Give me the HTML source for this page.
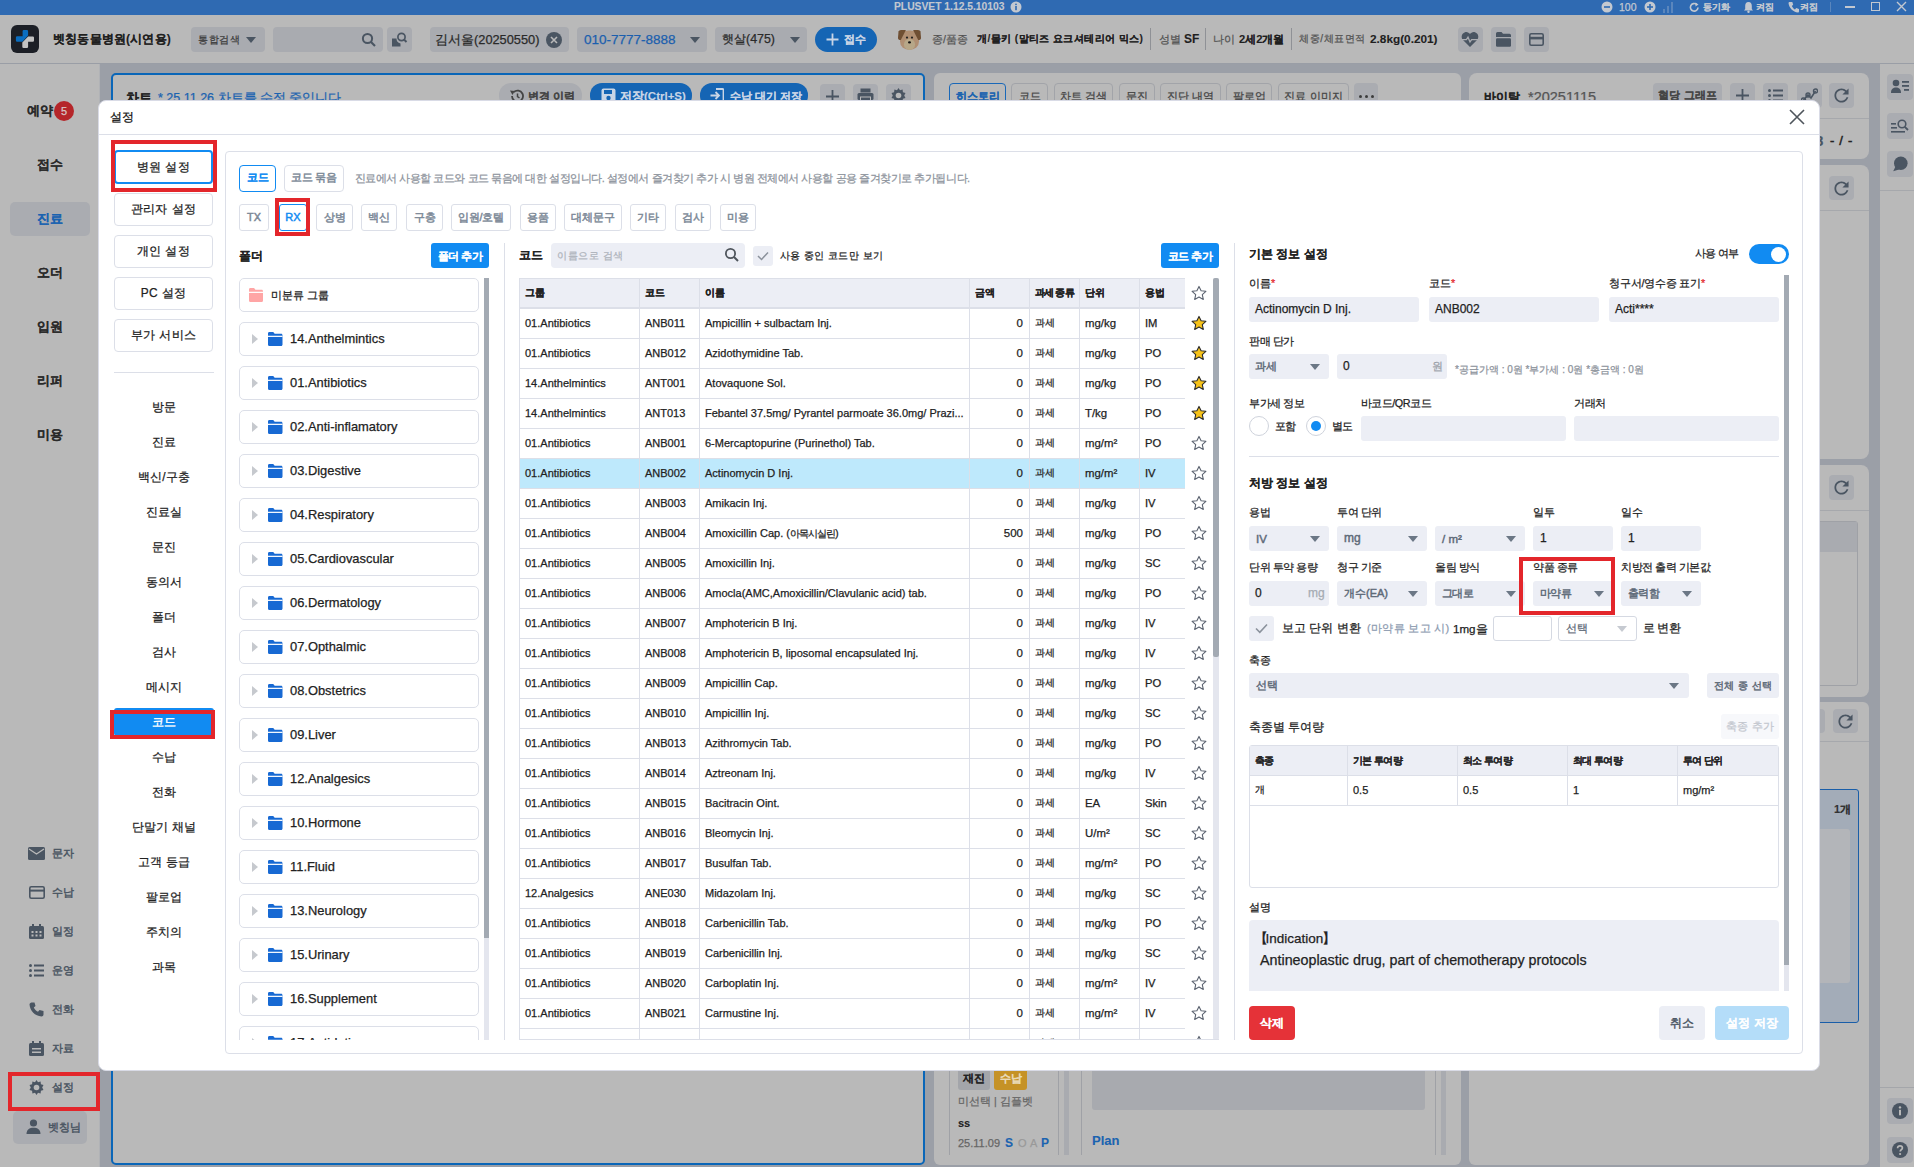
<!DOCTYPE html>
<html><head><meta charset="utf-8"><style>
*{box-sizing:border-box;margin:0;padding:0}
html,body{width:1914px;height:1167px;overflow:hidden}
body{position:relative;font-family:"Liberation Sans",sans-serif;color:#222;background:#9b9fa7}
.a{position:absolute}
.t{white-space:nowrap;-webkit-text-stroke:0.25px currentColor}
</style></head><body>
<div class="a " style="left:0px;top:0px;width:1914px;height:15px;background:#2f6ab2"></div>
<div class="a t" style="left:894px;top:-0.5px;line-height:14px;font-size:10.3px;font-weight:700;color:#c3c8d0;;-webkit-text-stroke:0.1px currentColor">PLUSVET 1.12.5.10103</div>
<svg class="a" style="left:1010px;top:1px;" width="12" height="12" viewBox="0 0 12 12"><circle cx="6" cy="6" r="5.5" fill="#c3c8d0"/><rect x="5.2" y="5" width="1.6" height="4.2" fill="#2f6ab2"/><circle cx="6" cy="3.3" r="0.9" fill="#2f6ab2"/></svg>
<svg class="a" style="left:1601px;top:1px;" width="12" height="12" viewBox="0 0 12 12"><circle cx="6" cy="6" r="5.5" fill="#c3c8d0"/><rect x="3" y="5.2" width="6" height="1.6" fill="#2f6ab2"/></svg>
<div class="a t" style="left:1619px;top:0.0px;line-height:14px;font-size:10.5px;font-weight:400;color:#c3c8d0;">100</div>
<svg class="a" style="left:1644px;top:1px;" width="12" height="12" viewBox="0 0 12 12"><circle cx="6" cy="6" r="5.5" fill="#c3c8d0"/><rect x="3" y="5.2" width="6" height="1.6" fill="#2f6ab2"/><rect x="5.2" y="3" width="1.6" height="6" fill="#2f6ab2"/></svg>
<svg class="a" style="left:1663px;top:1px;" width="12" height="12" viewBox="0 0 12 12"><rect x="0" y="8" width="2" height="4" fill="#5a86bd"/><rect x="4" y="5" width="2" height="7" fill="#5a86bd"/><rect x="8" y="1" width="2" height="11" fill="#5a86bd"/></svg>
<svg class="a" style="left:1689px;top:2px;" width="11" height="11" viewBox="0 0 11 11"><path d="M9 5.5A3.8 3.8 0 1 1 7.6 2.4" fill="none" stroke="#c3c8d0" stroke-width="1.6"/><path d="M6.5 0.5L9.5 2.5L6.5 4.5Z" fill="#c3c8d0"/></svg>
<div class="a t" style="left:1703px;top:0.0px;line-height:14px;font-size:9px;font-weight:700;color:#c3c8d0;;-webkit-text-stroke:0.1px currentColor">동기화</div>
<svg class="a" style="left:1743px;top:1px;" width="11" height="12" viewBox="0 0 11 12"><path d="M5.5 1C3 1 2.2 3 2.2 5V8L1 9.5H10L8.8 8V5C8.8 3 8 1 5.5 1Z" fill="#c3c8d0"/><circle cx="5.5" cy="10.8" r="1.2" fill="#c3c8d0"/></svg>
<div class="a t" style="left:1756px;top:0.0px;line-height:14px;font-size:9px;font-weight:700;color:#c3c8d0;;-webkit-text-stroke:0.1px currentColor">켜짐</div>
<svg class="a" style="left:1788px;top:1px;" width="11" height="12" viewBox="0 0 11 12"><path d="M2 1L4.3 1L5.2 3.8L3.8 5C4.5 6.6 5.6 7.8 7 8.5L8.2 7.1L11 8V10.5C11 11 10.5 11.5 10 11.5C5 11 1 7 0.5 2C0.5 1.5 1 1 2 1Z" fill="#c3c8d0"/></svg>
<div class="a t" style="left:1800px;top:0.0px;line-height:14px;font-size:9px;font-weight:700;color:#c3c8d0;;-webkit-text-stroke:0.1px currentColor">켜짐</div>
<div class="a " style="left:1830px;top:2px;width:1px;height:10px;background:#5a86bd"></div>
<div class="a " style="left:1845px;top:6px;width:10px;height:1.5px;background:#c3c8d0"></div>
<div class="a " style="left:1871px;top:2px;width:9px;height:9px;border:1.3px solid #c3c8d0"></div>
<svg class="a" style="left:1896px;top:1px;" width="11" height="11" viewBox="0 0 11 11"><path d="M1 1L10 10M10 1L1 10" stroke="#c3c8d0" stroke-width="1.4"/></svg>
<div class="a " style="left:0px;top:15px;width:1914px;height:49px;background:#b9b9b9;border-bottom:1px solid #9a9ea6"></div>
<div class="a " style="left:11px;top:25px;width:28px;height:28px;background:#1c1f26;border-radius:6px"></div>
<svg class="a" style="left:11px;top:25px;" width="28" height="28" viewBox="0 0 28 28"><path d="M11.6 6.2Q11.6 5 12.8 5L15.9 5Q17.1 5 17.1 6.2L17.1 10.6L11.4 16.8L6.1 16.8Q4.9 16.8 4.9 15.6L4.9 12.5Q4.9 11.3 6.1 11.3L11.6 11.3Z" fill="#0a6dbf"/><path d="M17.1 11.4L21.8 11.4Q23 11.4 23 12.6L23 15.6Q23 16.8 21.8 16.8L17.1 16.8L17.1 21.8Q17.1 23 15.9 23L12.5 23Q11.3 23 11.3 21.8L11.3 17.4Z" fill="#c2c2c2"/></svg>
<div class="a t" style="left:53px;top:29.5px;line-height:19px;font-size:12.2px;font-weight:700;color:#1f1f1f;letter-spacing:0.18px;-webkit-text-stroke:0.1px currentColor">벳칭동물병원(시연용)</div>
<div class="a " style="left:191px;top:27px;width:74px;height:25px;background:#a9abb0;border-radius:4px"></div>
<div class="a t" style="left:198px;top:31.5px;line-height:16px;font-size:10.4px;font-weight:400;color:#3c3c3c;letter-spacing:0.6px">통합검색</div>
<svg class="a" style="left:246px;top:37px;" width="10" height="6" viewBox="0 0 10 6"><path d="M0 0H10L5 6Z" fill="#4a5562"/></svg>
<div class="a " style="left:273px;top:27px;width:110px;height:25px;background:#a9abb0;border-radius:4px"></div>
<svg class="a" style="left:361px;top:32px;" width="16" height="16" viewBox="0 0 16 16"><circle cx="6.5" cy="6.5" r="4.6" fill="none" stroke="#4a5562" stroke-width="2"/><path d="M10 10L14 14" stroke="#4a5562" stroke-width="2.2"/></svg>
<div class="a " style="left:387px;top:27px;width:25px;height:25px;background:#a9abb0;border-radius:4px"></div>
<svg class="a" style="left:391px;top:31px;" width="17" height="17" viewBox="0 0 17 17"><path d="M1 7.5H5.5A5 5 0 0 0 9.5 12.5V15.5H1Z" fill="#4a5562"/><circle cx="10.5" cy="6" r="3.6" fill="none" stroke="#4a5562" stroke-width="1.7"/><path d="M13 8.5L15.5 11" stroke="#4a5562" stroke-width="1.9"/></svg>
<div class="a " style="left:430px;top:27px;width:139px;height:25px;background:#a9abb0;border-radius:4px"></div>
<div class="a t" style="left:435px;top:29.5px;line-height:20px;font-size:12.8px;font-weight:400;color:#2a2a2a;">김서울(20250550)</div>
<svg class="a" style="left:546px;top:32px;" width="16" height="16" viewBox="0 0 16 16"><circle cx="8" cy="8" r="8" fill="#4a5562"/><path d="M5 5L11 11M11 5L5 11" stroke="#b9b9b9" stroke-width="1.6"/></svg>
<div class="a " style="left:577px;top:27px;width:130px;height:25px;background:#a9abb0;border-radius:4px"></div>
<div class="a t" style="left:584px;top:29.0px;line-height:21px;font-size:13.5px;font-weight:400;color:#1b5fae;">010-7777-8888</div>
<svg class="a" style="left:690px;top:37px;" width="10" height="6" viewBox="0 0 10 6"><path d="M0 0H10L5 6Z" fill="#4a5562"/></svg>
<div class="a " style="left:715px;top:27px;width:92px;height:25px;background:#a9abb0;border-radius:4px"></div>
<div class="a t" style="left:722px;top:30.0px;line-height:19px;font-size:12.4px;font-weight:400;color:#2a2a2a;">햇살(475)</div>
<svg class="a" style="left:790px;top:37px;" width="10" height="6" viewBox="0 0 10 6"><path d="M0 0H10L5 6Z" fill="#4a5562"/></svg>
<div class="a " style="left:815px;top:27px;width:62px;height:25px;background:#1565b4;border-radius:13px"></div>
<svg class="a" style="left:826px;top:33px;" width="13" height="13" viewBox="0 0 13 13"><path d="M6.5 0.5V12.5M0.5 6.5H12.5" stroke="#c8d5e6" stroke-width="1.8"/></svg>
<div class="a t" style="left:844px;top:31.0px;line-height:17px;font-size:11px;font-weight:700;color:#c8d5e6;;-webkit-text-stroke:0.1px currentColor">접수</div>
<svg class="a" style="left:897px;top:27px;" width="25" height="24" viewBox="0 0 25 24"><rect x="3" y="3.5" width="19" height="19.2" rx="8.5" fill="#b08f73"/><path d="M1.5 4.5Q2 3 4 3L8.9 3L3.8 13Q1 13 1 11Z" fill="#6f4f33"/><path d="M23.5 4.5Q23 3 21 3L16.1 3L21.2 13Q24 13 24 11Z" fill="#6f4f33"/><circle cx="12.5" cy="17.4" r="5.6" fill="#b7a788"/><circle cx="10" cy="10.6" r="1.1" fill="#222"/><circle cx="15" cy="10.6" r="1.1" fill="#222"/><ellipse cx="12.5" cy="15.4" rx="1.5" ry="1.1" fill="#111"/></svg>
<div class="a t" style="left:932px;top:30.5px;line-height:17px;font-size:10.7px;font-weight:400;color:#545454;">종/품종</div>
<div class="a t" style="left:977px;top:31.0px;line-height:16px;font-size:10.2px;font-weight:700;color:#1f1f1f;letter-spacing:0.41px;-webkit-text-stroke:0.1px currentColor">개/몰키 (말티즈 요크셔테리어 믹스)</div>
<div class="a " style="left:1150px;top:28px;width:1px;height:22px;background:#8f9196"></div>
<div class="a t" style="left:1159px;top:30.5px;line-height:17px;font-size:10.7px;font-weight:400;color:#545454;">성별</div>
<div class="a t" style="left:1184px;top:29.5px;line-height:19px;font-size:12px;font-weight:700;color:#1f1f1f;;-webkit-text-stroke:0.1px currentColor">SF</div>
<div class="a " style="left:1205px;top:28px;width:1px;height:22px;background:#8f9196"></div>
<div class="a t" style="left:1213px;top:30.5px;line-height:17px;font-size:10.7px;font-weight:400;color:#545454;">나이</div>
<div class="a t" style="left:1239px;top:30.5px;line-height:17px;font-size:11.2px;font-weight:700;color:#1f1f1f;;-webkit-text-stroke:0.1px currentColor">2세2개월</div>
<div class="a " style="left:1291px;top:28px;width:1px;height:22px;background:#8f9196"></div>
<div class="a t" style="left:1299px;top:31.0px;line-height:16px;font-size:10.1px;font-weight:400;color:#545454;letter-spacing:0.57px">체중/체표면적</div>
<div class="a t" style="left:1370px;top:30.0px;line-height:18px;font-size:11.8px;font-weight:700;color:#1f1f1f;;-webkit-text-stroke:0.1px currentColor">2.8kg(0.201)</div>
<div class="a " style="left:1458px;top:27px;width:25px;height:25px;background:#a9abb0;border-radius:4px"></div>
<div class="a " style="left:1491px;top:27px;width:25px;height:25px;background:#a9abb0;border-radius:4px"></div>
<div class="a " style="left:1524px;top:27px;width:25px;height:25px;background:#a9abb0;border-radius:4px"></div>
<svg class="a" style="left:1461px;top:31px;" width="18" height="16" viewBox="0 0 18 16"><path d="M9 16L2 9C0 7 0 2.5 4 1.2C6.3 0.5 8 1.8 9 3C10 1.8 11.7 0.5 14 1.2C18 2.5 18 7 16 9Z" fill="#4a5562"/><path d="M0 8.6H5.4L7 6.2L9 11L10.6 8.6H18" fill="none" stroke="#aaacb1" stroke-width="1.3"/></svg>
<svg class="a" style="left:1496px;top:32px;" width="15" height="15" viewBox="0 0 15 15"><path d="M0 1.5Q0 0 1.5 0H5.5L7 1.8H13.5Q15 1.8 15 3.3V5H0Z" fill="#4a5562"/><rect x="0" y="6.3" width="15" height="8.5" rx="1.2" fill="#4a5562"/></svg>
<svg class="a" style="left:1529px;top:33px;" width="15" height="13" viewBox="0 0 15 13"><rect x="0.8" y="0.8" width="13.4" height="11.4" rx="1.5" fill="none" stroke="#4a5562" stroke-width="1.6"/><rect x="0.8" y="3.8" width="13.4" height="2.6" fill="#4a5562"/></svg>
<div class="a " style="left:0px;top:64px;width:100px;height:1103px;background:#b9b9b9;border-right:1px solid #b0b2b6"></div>
<div class="a t" style="left:27px;top:101.0px;line-height:20px;font-size:13px;font-weight:700;color:#2a2a2a;;-webkit-text-stroke:0.1px currentColor">예약</div>
<div class="a " style="left:54px;top:101px;width:20px;height:20px;background:#b5262a;border-radius:10px"></div>
<div class="a t" style="left:54px;top:103.0px;line-height:17px;font-size:11px;font-weight:400;color:#d8c6c6;width:20px;text-align:center;">5</div>
<div class="a t" style="left:0px;top:155.0px;line-height:20px;font-size:13px;font-weight:700;color:#2a2a2a;width:99px;text-align:center;;-webkit-text-stroke:0.1px currentColor">접수</div>
<div class="a " style="left:10px;top:202px;width:80px;height:34px;background:#aaacb1;border-radius:5px"></div>
<div class="a t" style="left:0px;top:208.5px;line-height:20px;font-size:13px;font-weight:700;color:#1b63b0;width:99px;text-align:center;;-webkit-text-stroke:0.1px currentColor">진료</div>
<div class="a t" style="left:0px;top:262.5px;line-height:20px;font-size:13px;font-weight:700;color:#2a2a2a;width:99px;text-align:center;;-webkit-text-stroke:0.1px currentColor">오더</div>
<div class="a t" style="left:0px;top:317.0px;line-height:20px;font-size:13px;font-weight:700;color:#2a2a2a;width:99px;text-align:center;;-webkit-text-stroke:0.1px currentColor">입원</div>
<div class="a t" style="left:0px;top:371.0px;line-height:20px;font-size:13px;font-weight:700;color:#2a2a2a;width:99px;text-align:center;;-webkit-text-stroke:0.1px currentColor">리퍼</div>
<div class="a t" style="left:0px;top:425.0px;line-height:20px;font-size:13px;font-weight:700;color:#2a2a2a;width:99px;text-align:center;;-webkit-text-stroke:0.1px currentColor">미용</div>
<div class="a t" style="left:52px;top:845.0px;line-height:17px;font-size:11px;font-weight:400;color:#4a5562;-webkit-text-stroke:0.45px currentColor">문자</div>
<div class="a t" style="left:52px;top:884.0px;line-height:17px;font-size:11px;font-weight:400;color:#4a5562;-webkit-text-stroke:0.45px currentColor">수납</div>
<div class="a t" style="left:52px;top:923.0px;line-height:17px;font-size:11px;font-weight:400;color:#4a5562;-webkit-text-stroke:0.45px currentColor">일정</div>
<div class="a t" style="left:52px;top:962.0px;line-height:17px;font-size:11px;font-weight:400;color:#4a5562;-webkit-text-stroke:0.45px currentColor">운영</div>
<div class="a t" style="left:52px;top:1001.0px;line-height:17px;font-size:11px;font-weight:400;color:#4a5562;-webkit-text-stroke:0.45px currentColor">전화</div>
<div class="a t" style="left:52px;top:1040.0px;line-height:17px;font-size:11px;font-weight:400;color:#4a5562;-webkit-text-stroke:0.45px currentColor">자료</div>
<div class="a t" style="left:52px;top:1079.0px;line-height:17px;font-size:11px;font-weight:400;color:#4a5562;-webkit-text-stroke:0.45px currentColor">설정</div>
<svg class="a" style="left:28px;top:847px;" width="17" height="13" viewBox="0 0 17 13"><rect x="0" y="0" width="17" height="13" rx="1.5" fill="#4a5562"/><path d="M1 2L8.5 7L16 2" fill="none" stroke="#b9b9b9" stroke-width="1.3"/></svg>
<svg class="a" style="left:29px;top:886px;" width="16" height="13" viewBox="0 0 16 13"><rect x="0.8" y="0.8" width="14.4" height="11.4" rx="1.5" fill="none" stroke="#4a5562" stroke-width="1.6"/><rect x="0.8" y="3.6" width="14.4" height="2" fill="#4a5562"/></svg>
<svg class="a" style="left:29px;top:924px;" width="15" height="15" viewBox="0 0 15 15"><rect x="0" y="2" width="15" height="13" rx="1.5" fill="#4a5562"/><rect x="3" y="0" width="2" height="4" fill="#4a5562"/><rect x="10" y="0" width="2" height="4" fill="#4a5562"/><g fill="#b9b9b9"><rect x="2.5" y="7" width="2" height="2"/><rect x="6.5" y="7" width="2" height="2"/><rect x="10.5" y="7" width="2" height="2"/><rect x="2.5" y="10.5" width="2" height="2"/><rect x="6.5" y="10.5" width="2" height="2"/><rect x="10.5" y="10.5" width="2" height="2"/></g></svg>
<svg class="a" style="left:29px;top:964px;" width="15" height="13" viewBox="0 0 15 13"><g fill="#4a5562"><circle cx="1.5" cy="1.5" r="1.5"/><circle cx="1.5" cy="6.5" r="1.5"/><circle cx="1.5" cy="11.5" r="1.5"/><rect x="5" y="0.5" width="10" height="2"/><rect x="5" y="5.5" width="10" height="2"/><rect x="5" y="10.5" width="10" height="2"/></g></svg>
<svg class="a" style="left:29px;top:1002px;" width="15" height="15" viewBox="0 0 15 15"><path d="M2.5 0.5L5.5 0.5L6.5 4L4.8 5.5C5.6 7.3 7 8.8 9 9.8L10.5 8L14.5 9V12.5C14.5 13.5 13.5 14.5 12.5 14.5C6 14 1 9 0.5 2.5C0.5 1.5 1.5 0.5 2.5 0.5Z" fill="#4a5562"/></svg>
<svg class="a" style="left:29px;top:1041px;" width="15" height="15" viewBox="0 0 15 15"><rect x="0" y="2" width="15" height="13" rx="1.5" fill="#4a5562"/><rect x="3" y="0" width="2" height="4" fill="#4a5562"/><rect x="10" y="0" width="2" height="4" fill="#4a5562"/><rect x="3" y="7" width="9" height="1.5" fill="#b9b9b9"/><rect x="3" y="10.5" width="9" height="1.5" fill="#b9b9b9"/></svg>
<svg class="a" style="left:29px;top:1080px;" width="15" height="15" viewBox="0 0 15 15"><path d="M7.5 0L9 2.2L11.6 1.5L11.9 4.2L14.5 5L13.2 7.5L14.5 10L11.9 10.8L11.6 13.5L9 12.8L7.5 15L6 12.8L3.4 13.5L3.1 10.8L0.5 10L1.8 7.5L0.5 5L3.1 4.2L3.4 1.5L6 2.2Z" fill="#4a5562"/><circle cx="7.5" cy="7.5" r="2.8" fill="#b9b9b9"/></svg>
<div class="a " style="left:8px;top:1072px;width:91.5px;height:39px;border:4px solid #e3262b"></div>
<div class="a " style="left:13px;top:1111px;width:74px;height:33px;background:#aaacb1;border-radius:5px"></div>
<svg class="a" style="left:26px;top:1119px;" width="15" height="15" viewBox="0 0 15 15"><circle cx="7.5" cy="4" r="3.6" fill="#4a5562"/><path d="M0.5 15C0.5 10.5 3.5 8.7 7.5 8.7C11.5 8.7 14.5 10.5 14.5 15Z" fill="#4a5562"/></svg>
<div class="a t" style="left:48px;top:1118.5px;line-height:17px;font-size:11px;font-weight:400;color:#4a5562;-webkit-text-stroke:0.45px currentColor">벳칭님</div>
<div class="a " style="left:111px;top:73px;width:814px;height:1092px;background:#b9b9b9;border-radius:5px;border:2px solid #0a66b8"></div>
<div class="a t" style="left:126px;top:87.5px;line-height:20px;font-size:13px;font-weight:700;color:#222;;-webkit-text-stroke:0.1px currentColor">차트</div>
<div class="a t" style="left:158px;top:87.5px;line-height:20px;font-size:12.5px;font-weight:400;color:#1b63b0;">* 25.11.26 차트를 수정 중입니다</div>
<div class="a " style="left:499px;top:83px;width:83px;height:25px;background:#aaacb1;border-radius:12px"></div>
<div class="a t" style="left:528px;top:87.5px;line-height:17px;font-size:11px;font-weight:700;color:#444;;-webkit-text-stroke:0.1px currentColor">변경 이력</div>
<div class="a " style="left:590px;top:83px;width:102px;height:25px;background:#1565b4;border-radius:12px"></div>
<div class="a t" style="left:620px;top:87.0px;line-height:18px;font-size:11.5px;font-weight:700;color:#c8d5e6;;-webkit-text-stroke:0.1px currentColor">저장(Ctrl+S)</div>
<div class="a " style="left:700px;top:83px;width:108px;height:25px;background:#1565b4;border-radius:12px"></div>
<div class="a t" style="left:730px;top:87.5px;line-height:17px;font-size:11px;font-weight:700;color:#c8d5e6;;-webkit-text-stroke:0.1px currentColor">수납 대기 저장</div>
<div class="a " style="left:820px;top:84px;width:25px;height:24px;background:#aaacb1;border-radius:4px"></div>
<div class="a " style="left:853px;top:84px;width:25px;height:24px;background:#aaacb1;border-radius:4px"></div>
<div class="a " style="left:886px;top:84px;width:25px;height:24px;background:#aaacb1;border-radius:4px"></div>
<svg class="a" style="left:509px;top:89px;" width="16" height="14" viewBox="0 0 16 14"><path d="M3 7A5.5 5.5 0 1 0 4.8 3" fill="none" stroke="#444" stroke-width="1.8"/><path d="M1 1.5L5.8 2L3.5 6Z" fill="#444"/><path d="M8.5 4.5V7.5L10.5 9" fill="none" stroke="#444" stroke-width="1.5"/></svg>
<svg class="a" style="left:601px;top:88px;" width="15" height="15" viewBox="0 0 15 15"><rect x="0.5" y="0.5" width="14" height="14" rx="2" fill="#c8d5e6"/><rect x="3" y="2" width="8" height="4" fill="#1565b4"/><circle cx="7.5" cy="10" r="2.2" fill="#1565b4"/></svg>
<svg class="a" style="left:710px;top:88px;" width="14" height="15" viewBox="0 0 14 15"><path d="M6 1H12.5C13 1 13.5 1.5 13.5 2V13C13.5 13.5 13 14 12.5 14H6" fill="none" stroke="#c8d5e6" stroke-width="1.8"/><path d="M0.5 7.5H8.5M5.5 4L9 7.5L5.5 11" fill="none" stroke="#c8d5e6" stroke-width="1.8"/></svg>
<svg class="a" style="left:825px;top:89px;" width="15" height="15" viewBox="0 0 15 15"><path d="M7.5 1V14M1 7.5H14" stroke="#4a5562" stroke-width="1.8"/></svg>
<svg class="a" style="left:857px;top:88px;" width="17" height="15" viewBox="0 0 17 15"><rect x="3.5" y="0.5" width="10" height="4" fill="#4a5562"/><rect x="0.5" y="5" width="16" height="7" rx="1.5" fill="#4a5562"/><rect x="3.5" y="9" width="10" height="6" fill="#4a5562" stroke="#b9b9b9" stroke-width="1"/></svg>
<svg class="a" style="left:891px;top:88px;" width="15" height="15" viewBox="0 0 15 15"><path d="M7.5 0L9 2.2L11.6 1.5L11.9 4.2L14.5 5L13.2 7.5L14.5 10L11.9 10.8L11.6 13.5L9 12.8L7.5 15L6 12.8L3.4 13.5L3.1 10.8L0.5 10L1.8 7.5L0.5 5L3.1 4.2L3.4 1.5L6 2.2Z" fill="#4a5562"/><circle cx="7.5" cy="7.5" r="2.8" fill="#b9b9b9"/></svg>
<div class="a " style="left:934px;top:73px;width:527px;height:1092px;background:#b9b9b9;border-radius:6px"></div>
<div class="a " style="left:949px;top:83px;width:57px;height:24px;border:1px solid #1a68b8;border-radius:4px;background:#b9b9b9"></div>
<div class="a t" style="left:949px;top:87.5px;line-height:17px;font-size:11px;font-weight:700;color:#1b63b0;width:57px;text-align:center;;-webkit-text-stroke:0.1px currentColor">히스토리</div>
<div class="a " style="left:1011px;top:83px;width:37px;height:24px;border:1px solid #a2a4a9;border-radius:4px"></div>
<div class="a t" style="left:1011px;top:87.5px;line-height:17px;font-size:11px;font-weight:400;color:#444;width:37px;text-align:center;">코드</div>
<div class="a " style="left:1054px;top:83px;width:59px;height:24px;border:1px solid #a2a4a9;border-radius:4px"></div>
<div class="a t" style="left:1054px;top:87.5px;line-height:17px;font-size:11px;font-weight:400;color:#444;width:59px;text-align:center;">차트 검색</div>
<div class="a " style="left:1119px;top:83px;width:36px;height:24px;border:1px solid #a2a4a9;border-radius:4px"></div>
<div class="a t" style="left:1119px;top:87.5px;line-height:17px;font-size:11px;font-weight:400;color:#444;width:36px;text-align:center;">문진</div>
<div class="a " style="left:1160px;top:83px;width:61px;height:24px;border:1px solid #a2a4a9;border-radius:4px"></div>
<div class="a t" style="left:1160px;top:87.5px;line-height:17px;font-size:11px;font-weight:400;color:#444;width:61px;text-align:center;">진단 내역</div>
<div class="a " style="left:1226px;top:83px;width:46px;height:24px;border:1px solid #a2a4a9;border-radius:4px"></div>
<div class="a t" style="left:1226px;top:87.5px;line-height:17px;font-size:11px;font-weight:400;color:#444;width:46px;text-align:center;">팔로업</div>
<div class="a " style="left:1278px;top:83px;width:71px;height:24px;border:1px solid #a2a4a9;border-radius:4px"></div>
<div class="a t" style="left:1278px;top:87.5px;line-height:17px;font-size:11px;font-weight:400;color:#444;width:71px;text-align:center;">진료 이미지</div>
<div class="a " style="left:1354px;top:83px;width:24px;height:24px;background:#aaacb1;border-radius:4px"></div>
<div class="a " style="left:1358.5px;top:94.5px;width:3.2px;height:3.2px;background:#3c3c3c;border-radius:2px"></div>
<div class="a " style="left:1364.5px;top:94.5px;width:3.2px;height:3.2px;background:#3c3c3c;border-radius:2px"></div>
<div class="a " style="left:1370.5px;top:94.5px;width:3.2px;height:3.2px;background:#3c3c3c;border-radius:2px"></div>
<div class="a " style="left:958px;top:1068px;width:32px;height:22px;background:#a3a5aa;border-radius:3px"></div>
<div class="a t" style="left:958px;top:1070.0px;line-height:16px;font-size:10.5px;font-weight:700;color:#222;width:32px;text-align:center;;-webkit-text-stroke:0.1px currentColor">재진</div>
<div class="a " style="left:994px;top:1068px;width:33px;height:22px;background:#c59226;border-radius:3px"></div>
<div class="a t" style="left:994px;top:1070.0px;line-height:16px;font-size:10.5px;font-weight:700;color:#e8d9b5;width:33px;text-align:center;;-webkit-text-stroke:0.1px currentColor">수납</div>
<div class="a t" style="left:958px;top:1093.0px;line-height:16px;font-size:10.5px;font-weight:400;color:#666;">미선택 | 김플벳</div>
<div class="a t" style="left:958px;top:1114.5px;line-height:17px;font-size:11px;font-weight:700;color:#222;;-webkit-text-stroke:0.1px currentColor">ss</div>
<div class="a t" style="left:958px;top:1135.0px;line-height:17px;font-size:11px;font-weight:400;color:#666;">25.11.09</div>
<div class="a t" style="left:1005px;top:1134.0px;line-height:19px;font-size:12px;font-weight:700;color:#1b63b0;;-webkit-text-stroke:0.1px currentColor">S</div>
<div class="a t" style="left:1018px;top:1135.0px;line-height:17px;font-size:11px;font-weight:400;color:#999;">O</div>
<div class="a t" style="left:1030px;top:1135.0px;line-height:17px;font-size:11px;font-weight:400;color:#999;">A</div>
<div class="a t" style="left:1041px;top:1134.0px;line-height:19px;font-size:12px;font-weight:700;color:#1b63b0;;-webkit-text-stroke:0.1px currentColor">P</div>
<div class="a " style="left:949px;top:1040px;width:1px;height:115px;background:#9fa1a6"></div>
<div class="a " style="left:1058px;top:1040px;width:1px;height:115px;background:#9fa1a6"></div>
<div class="a " style="left:1064px;top:1040px;width:5px;height:115px;background:#a9abb0"></div>
<div class="a " style="left:1081px;top:1040px;width:1px;height:115px;background:#9fa1a6"></div>
<div class="a " style="left:1092px;top:1040px;width:333px;height:70px;background:#a8aaaf;border-radius:3px"></div>
<div class="a t" style="left:1092px;top:1131.0px;line-height:20px;font-size:13px;font-weight:700;color:#1b63b0;;-webkit-text-stroke:0.1px currentColor">Plan</div>
<div class="a " style="left:1435px;top:1040px;width:1px;height:115px;background:#9fa1a6"></div>
<div class="a " style="left:1441px;top:1040px;width:5px;height:115px;background:#a9abb0"></div>
<div class="a " style="left:1469px;top:73px;width:400px;height:86px;background:#b9b9b9;border-radius:8px"></div>
<div class="a t" style="left:1484px;top:87.5px;line-height:19px;font-size:12px;font-weight:700;color:#222;;-webkit-text-stroke:0.1px currentColor">바이탈</div>
<div class="a t" style="left:1528px;top:86.0px;line-height:23px;font-size:14.5px;font-weight:400;color:#555;">*20251115</div>
<div class="a " style="left:1653px;top:83px;width:69px;height:24px;background:#aaacb1;border-radius:4px"></div>
<div class="a t" style="left:1653px;top:86.5px;line-height:17px;font-size:11px;font-weight:700;color:#444;width:69px;text-align:center;;-webkit-text-stroke:0.1px currentColor">혈당 그래프</div>
<div class="a " style="left:1730px;top:83px;width:25px;height:25px;background:#aaacb1;border-radius:4px"></div>
<div class="a " style="left:1763px;top:83px;width:25px;height:25px;background:#aaacb1;border-radius:4px"></div>
<div class="a " style="left:1797px;top:83px;width:25px;height:25px;background:#aaacb1;border-radius:4px"></div>
<div class="a " style="left:1829px;top:83px;width:25px;height:25px;background:#aaacb1;border-radius:4px"></div>
<svg class="a" style="left:1735px;top:88px;" width="15" height="15" viewBox="0 0 15 15"><path d="M7.5 1V14M1 7.5H14" stroke="#4a5562" stroke-width="1.8"/></svg>
<svg class="a" style="left:1768px;top:89px;" width="15" height="13" viewBox="0 0 15 13"><g fill="#4a5562"><circle cx="1.5" cy="1.5" r="1.5"/><circle cx="1.5" cy="6.5" r="1.5"/><circle cx="1.5" cy="11.5" r="1.5"/><rect x="5" y="0.5" width="10" height="2"/><rect x="5" y="5.5" width="10" height="2"/><rect x="5" y="10.5" width="10" height="2"/></g></svg>
<svg class="a" style="left:1801px;top:88px;" width="17" height="15" viewBox="0 0 17 15"><path d="M2.5 12L7 7L10 10L14.5 3" fill="none" stroke="#4a5562" stroke-width="1.6"/><circle cx="2.5" cy="12" r="2" fill="none" stroke="#4a5562" stroke-width="1.4"/><circle cx="7" cy="7" r="2" fill="none" stroke="#4a5562" stroke-width="1.4"/><circle cx="14.5" cy="3" r="2" fill="none" stroke="#4a5562" stroke-width="1.4"/></svg>
<div class="a " style="left:1469px;top:118px;width:400px;height:1px;background:#a6a8ac"></div>
<div class="a t" style="left:1815px;top:128.5px;line-height:24px;font-size:15px;font-weight:700;color:#4a5562;;-webkit-text-stroke:0.1px currentColor">8</div>
<div class="a t" style="left:1830px;top:130.5px;line-height:20px;font-size:13px;font-weight:400;color:#222;letter-spacing:5px;-webkit-text-stroke:0.5px currentColor">-/-</div>
<div class="a " style="left:1469px;top:165px;width:400px;height:294px;background:#b9b9b9;border-radius:8px"></div>
<div class="a " style="left:1829px;top:176px;width:25px;height:24px;background:#aaacb1;border-radius:4px"></div>
<div class="a " style="left:1469px;top:210px;width:400px;height:1px;background:#a6a8ac"></div>
<div class="a " style="left:1469px;top:465px;width:400px;height:232px;background:#b9b9b9;border-radius:8px"></div>
<div class="a " style="left:1829px;top:475px;width:25px;height:25px;background:#aaacb1;border-radius:4px"></div>
<div class="a " style="left:1469px;top:510px;width:400px;height:1px;background:#a6a8ac"></div>
<div class="a " style="left:1480px;top:521px;width:378px;height:165px;border:1px solid #9fa1a6;border-radius:3px"></div>
<div class="a " style="left:1481px;top:522px;width:376px;height:30px;background:#a9abb0"></div>
<div class="a " style="left:1469px;top:702px;width:400px;height:463px;background:#b9b9b9;border-radius:6px"></div>
<div class="a " style="left:1833px;top:709px;width:25px;height:24px;background:#aaacb1;border-radius:4px"></div>
<div class="a " style="left:1800px;top:709px;width:25px;height:24px;background:#aaacb1;border-radius:4px"></div>
<div class="a " style="left:1469px;top:741px;width:400px;height:1px;background:#a6a8ac"></div>
<div class="a " style="left:1480px;top:789px;width:379px;height:234px;background:#a3acb8;border:1px solid #1a5ea8;border-radius:3px"></div>
<div class="a " style="left:1490px;top:829px;width:360px;height:154px;background:#b3b5b9;border-radius:3px"></div>
<div class="a t" style="left:1834px;top:801.0px;line-height:17px;font-size:11px;font-weight:700;color:#333;;-webkit-text-stroke:0.1px currentColor">1개</div>
<svg class="a" style="left:1834px;top:88px;" width="15" height="15" viewBox="0 0 15 15"><svg x="0" y="0" width="15" height="15" viewBox="3.5 3.5 17 17"><path d="M17.65 6.35C16.2 4.9 14.21 4 12 4c-4.42 0-7.99 3.58-7.99 8s3.57 8 7.99 8c3.73 0 6.84-2.55 7.73-6h-2.08c-.82 2.33-3.04 4-5.65 4-3.31 0-6-2.69-6-6s2.69-6 6-6c1.66 0 3.14.69 4.22 1.78L13 11h7V4l-2.35 2.35z" fill="#4a5562"/></svg></svg>
<svg class="a" style="left:1834px;top:180.5px;" width="15" height="15" viewBox="0 0 15 15"><svg x="0" y="0" width="15" height="15" viewBox="3.5 3.5 17 17"><path d="M17.65 6.35C16.2 4.9 14.21 4 12 4c-4.42 0-7.99 3.58-7.99 8s3.57 8 7.99 8c3.73 0 6.84-2.55 7.73-6h-2.08c-.82 2.33-3.04 4-5.65 4-3.31 0-6-2.69-6-6s2.69-6 6-6c1.66 0 3.14.69 4.22 1.78L13 11h7V4l-2.35 2.35z" fill="#4a5562"/></svg></svg>
<svg class="a" style="left:1834px;top:480px;" width="15" height="15" viewBox="0 0 15 15"><svg x="0" y="0" width="15" height="15" viewBox="3.5 3.5 17 17"><path d="M17.65 6.35C16.2 4.9 14.21 4 12 4c-4.42 0-7.99 3.58-7.99 8s3.57 8 7.99 8c3.73 0 6.84-2.55 7.73-6h-2.08c-.82 2.33-3.04 4-5.65 4-3.31 0-6-2.69-6-6s2.69-6 6-6c1.66 0 3.14.69 4.22 1.78L13 11h7V4l-2.35 2.35z" fill="#4a5562"/></svg></svg>
<svg class="a" style="left:1838px;top:714px;" width="15" height="15" viewBox="0 0 15 15"><svg x="0" y="0" width="15" height="15" viewBox="3.5 3.5 17 17"><path d="M17.65 6.35C16.2 4.9 14.21 4 12 4c-4.42 0-7.99 3.58-7.99 8s3.57 8 7.99 8c3.73 0 6.84-2.55 7.73-6h-2.08c-.82 2.33-3.04 4-5.65 4-3.31 0-6-2.69-6-6s2.69-6 6-6c1.66 0 3.14.69 4.22 1.78L13 11h7V4l-2.35 2.35z" fill="#4a5562"/></svg></svg>
<div class="a " style="left:1880px;top:64px;width:34px;height:1103px;background:#b9b9b9"></div>
<div class="a " style="left:1880px;top:190px;width:34px;height:1px;background:#a6a8ac"></div>
<div class="a " style="left:1887px;top:74px;width:26px;height:26px;background:#aaacb1;border-radius:4px"></div>
<div class="a " style="left:1887px;top:113px;width:26px;height:26px;background:#aaacb1;border-radius:4px"></div>
<div class="a " style="left:1887px;top:151px;width:26px;height:26px;background:#aaacb1;border-radius:4px"></div>
<svg class="a" style="left:1891px;top:79px;" width="18" height="16" viewBox="0 0 18 16"><circle cx="5" cy="4" r="3.3" fill="#4a5562"/><path d="M0 14C0 9.8 2.2 8.5 5 8.5C7.8 8.5 10 9.8 10 14Z" fill="#4a5562"/><rect x="11" y="2" width="7" height="1.8" fill="#4a5562"/><rect x="11" y="6" width="7" height="1.8" fill="#4a5562"/><rect x="13" y="10" width="5" height="1.8" fill="#4a5562"/></svg>
<svg class="a" style="left:1891px;top:118px;" width="18" height="16" viewBox="0 0 18 16"><rect x="0" y="5" width="5" height="1.6" fill="#4a5562"/><rect x="0" y="9" width="6" height="1.6" fill="#4a5562"/><rect x="0" y="13" width="14" height="1.6" fill="#4a5562"/><circle cx="11" cy="6" r="3.8" fill="none" stroke="#4a5562" stroke-width="1.6"/><path d="M13.8 8.8L17 12" stroke="#4a5562" stroke-width="1.8"/></svg>
<svg class="a" style="left:1892px;top:156px;" width="16" height="16" viewBox="0 0 16 16"><circle cx="8.8" cy="7.2" r="6.8" fill="#4a5562"/><path d="M3.5 10.5L1.2 15.2L7 13.5Z" fill="#4a5562"/></svg>
<div class="a " style="left:1880px;top:1087px;width:34px;height:1px;background:#a4a6aa"></div>
<div class="a " style="left:1887px;top:1098px;width:26px;height:26px;background:#aaacb1;border-radius:4px"></div>
<svg class="a" style="left:1892px;top:1103px;" width="16" height="16" viewBox="0 0 16 16"><circle cx="8" cy="8" r="8" fill="#4a5562"/><rect x="7" y="6.8" width="2" height="5.5" fill="#b9b9b9"/><circle cx="8" cy="4.4" r="1.2" fill="#b9b9b9"/></svg>
<div class="a " style="left:1887px;top:1137px;width:26px;height:26px;background:#aaacb1;border-radius:4px"></div>
<svg class="a" style="left:1892px;top:1142px;" width="16" height="16" viewBox="0 0 16 16"><circle cx="8" cy="8" r="8" fill="#4a5562"/><path d="M5.6 6.2C5.6 4.8 6.7 3.8 8 3.8C9.4 3.8 10.4 4.7 10.4 6C10.4 7.6 8.2 7.8 8.2 9.6" fill="none" stroke="#b9b9b9" stroke-width="1.7"/><circle cx="8.1" cy="12" r="1.1" fill="#b9b9b9"/></svg>
<div class="a " style="left:98px;top:100px;width:1722px;height:971px;background:#fff;border-radius:8px;border:1px solid #d9dbe6"></div>
<div class="a t" style="left:110px;top:107.5px;line-height:18px;font-size:11.8px;font-weight:400;color:#111;">설정</div>
<svg class="a" style="left:1789px;top:109px;" width="16" height="16" viewBox="0 0 16 16"><path d="M1 1L15 15M15 1L1 15" stroke="#4f555c" stroke-width="1.6"/></svg>
<div class="a " style="left:99px;top:134px;width:1720px;height:1px;background:#dcdfe8"></div>
<div class="a " style="left:114px;top:150px;width:99px;height:34px;border:2px solid #118bf2;border-radius:4px"></div>
<div class="a t" style="left:114px;top:157.5px;line-height:19px;font-size:11.9px;font-weight:400;color:#222;width:99px;text-align:center;letter-spacing:0.35px">병원 설정</div>
<div class="a " style="left:114px;top:192.5px;width:99px;height:33.5px;border:1px solid #dcdfe8;border-radius:4px"></div>
<div class="a t" style="left:114px;top:199.8px;line-height:19px;font-size:11.9px;font-weight:400;color:#222;width:99px;text-align:center;letter-spacing:0.35px">관리자 설정</div>
<div class="a " style="left:114px;top:234.5px;width:99px;height:33.5px;border:1px solid #dcdfe8;border-radius:4px"></div>
<div class="a t" style="left:114px;top:241.8px;line-height:19px;font-size:11.9px;font-weight:400;color:#222;width:99px;text-align:center;letter-spacing:0.35px">개인 설정</div>
<div class="a " style="left:114px;top:276.5px;width:99px;height:33.5px;border:1px solid #dcdfe8;border-radius:4px"></div>
<div class="a t" style="left:114px;top:283.8px;line-height:19px;font-size:11.9px;font-weight:400;color:#222;width:99px;text-align:center;letter-spacing:0.35px">PC 설정</div>
<div class="a " style="left:114px;top:318.5px;width:99px;height:33.5px;border:1px solid #dcdfe8;border-radius:4px"></div>
<div class="a t" style="left:114px;top:325.8px;line-height:19px;font-size:11.9px;font-weight:400;color:#222;width:99px;text-align:center;letter-spacing:0.35px">부가 서비스</div>
<div class="a " style="left:111px;top:140px;width:106px;height:52px;border:4px solid #e3262b"></div>
<div class="a " style="left:114px;top:372px;width:100px;height:1px;background:#dcdfe8"></div>
<div class="a t" style="left:114px;top:398.0px;line-height:19px;font-size:11.9px;font-weight:400;color:#222;width:100px;text-align:center;">방문</div>
<div class="a t" style="left:114px;top:433.0px;line-height:19px;font-size:11.9px;font-weight:400;color:#222;width:100px;text-align:center;">진료</div>
<div class="a t" style="left:114px;top:468.0px;line-height:19px;font-size:11.9px;font-weight:400;color:#222;width:100px;text-align:center;">백신/구충</div>
<div class="a t" style="left:114px;top:503.0px;line-height:19px;font-size:11.9px;font-weight:400;color:#222;width:100px;text-align:center;">진료실</div>
<div class="a t" style="left:114px;top:538.0px;line-height:19px;font-size:11.9px;font-weight:400;color:#222;width:100px;text-align:center;">문진</div>
<div class="a t" style="left:114px;top:573.0px;line-height:19px;font-size:11.9px;font-weight:400;color:#222;width:100px;text-align:center;">동의서</div>
<div class="a t" style="left:114px;top:608.0px;line-height:19px;font-size:11.9px;font-weight:400;color:#222;width:100px;text-align:center;">폴더</div>
<div class="a t" style="left:114px;top:643.0px;line-height:19px;font-size:11.9px;font-weight:400;color:#222;width:100px;text-align:center;">검사</div>
<div class="a t" style="left:114px;top:678.0px;line-height:19px;font-size:11.9px;font-weight:400;color:#222;width:100px;text-align:center;">메시지</div>
<div class="a " style="left:114px;top:708px;width:100px;height:28px;background:#118bf2;border-radius:3px"></div>
<div class="a t" style="left:114px;top:713.0px;line-height:19px;font-size:11.9px;font-weight:400;color:#fff;width:100px;text-align:center;-webkit-text-stroke:0.4px currentColor">코드</div>
<div class="a t" style="left:114px;top:748.0px;line-height:19px;font-size:11.9px;font-weight:400;color:#222;width:100px;text-align:center;">수납</div>
<div class="a t" style="left:114px;top:783.0px;line-height:19px;font-size:11.9px;font-weight:400;color:#222;width:100px;text-align:center;">전화</div>
<div class="a t" style="left:114px;top:818.0px;line-height:19px;font-size:11.9px;font-weight:400;color:#222;width:100px;text-align:center;">단말기 채널</div>
<div class="a t" style="left:114px;top:853.0px;line-height:19px;font-size:11.9px;font-weight:400;color:#222;width:100px;text-align:center;">고객 등급</div>
<div class="a t" style="left:114px;top:888.0px;line-height:19px;font-size:11.9px;font-weight:400;color:#222;width:100px;text-align:center;">팔로업</div>
<div class="a t" style="left:114px;top:923.0px;line-height:19px;font-size:11.9px;font-weight:400;color:#222;width:100px;text-align:center;">주치의</div>
<div class="a t" style="left:114px;top:958.0px;line-height:19px;font-size:11.9px;font-weight:400;color:#222;width:100px;text-align:center;">과목</div>
<div class="a " style="left:110px;top:710px;width:105px;height:28.5px;border:4px solid #e3262b"></div>
<div class="a " style="left:225px;top:151px;width:1578px;height:903px;border:1px solid #dcdfe8;border-radius:4px"></div>
<div class="a " style="left:239px;top:165px;width:37px;height:27px;border:1px solid #118bf2;border-radius:4px"></div>
<div class="a t" style="left:239px;top:168.5px;line-height:16px;font-size:10.5px;font-weight:700;color:#118bf2;width:37px;text-align:center;;-webkit-text-stroke:0.1px currentColor">코드</div>
<div class="a " style="left:284px;top:165px;width:60px;height:27px;border:1px solid #dcdfe8;border-radius:4px"></div>
<div class="a t" style="left:284px;top:168.5px;line-height:16px;font-size:10.5px;font-weight:400;color:#7e8a98;width:60px;text-align:center;-webkit-text-stroke:0.5px currentColor">코드 묶음</div>
<div class="a t" style="left:354.5px;top:169.5px;line-height:17px;font-size:11px;font-weight:400;color:#8d939c;letter-spacing:-0.47px">진료에서 사용할 코드와 코드 묶음에 대한 설정입니다. 설정에서 즐겨찾기 추가 시 병원 전체에서 사용할 공용 즐겨찾기로 추가됩니다.</div>
<div class="a " style="left:239px;top:204px;width:30px;height:27px;border:1px solid #dcdfe8;border-radius:3px"></div>
<div class="a t" style="left:239px;top:209.0px;line-height:17px;font-size:10.8px;font-weight:400;color:#7e8a98;width:30px;text-align:center;-webkit-text-stroke:0.5px currentColor">TX</div>
<div class="a " style="left:279px;top:204px;width:28px;height:27px;border:1px solid #118bf2;border-radius:3px"></div>
<div class="a t" style="left:279px;top:209.0px;line-height:17px;font-size:11px;font-weight:400;color:#118bf2;width:28px;text-align:center;-webkit-text-stroke:0.45px currentColor">RX</div>
<div class="a " style="left:316px;top:204px;width:37px;height:27px;border:1px solid #dcdfe8;border-radius:3px"></div>
<div class="a t" style="left:316px;top:209.0px;line-height:17px;font-size:10.8px;font-weight:400;color:#7e8a98;width:37px;text-align:center;-webkit-text-stroke:0.5px currentColor">상병</div>
<div class="a " style="left:361px;top:204px;width:36px;height:27px;border:1px solid #dcdfe8;border-radius:3px"></div>
<div class="a t" style="left:361px;top:209.0px;line-height:17px;font-size:10.8px;font-weight:400;color:#7e8a98;width:36px;text-align:center;-webkit-text-stroke:0.5px currentColor">백신</div>
<div class="a " style="left:406px;top:204px;width:37px;height:27px;border:1px solid #dcdfe8;border-radius:3px"></div>
<div class="a t" style="left:406px;top:209.0px;line-height:17px;font-size:10.8px;font-weight:400;color:#7e8a98;width:37px;text-align:center;-webkit-text-stroke:0.5px currentColor">구충</div>
<div class="a " style="left:451px;top:204px;width:60px;height:27px;border:1px solid #dcdfe8;border-radius:3px"></div>
<div class="a t" style="left:451px;top:209.0px;line-height:17px;font-size:10.8px;font-weight:400;color:#7e8a98;width:60px;text-align:center;-webkit-text-stroke:0.5px currentColor">입원/호텔</div>
<div class="a " style="left:520px;top:204px;width:36px;height:27px;border:1px solid #dcdfe8;border-radius:3px"></div>
<div class="a t" style="left:520px;top:209.0px;line-height:17px;font-size:10.8px;font-weight:400;color:#7e8a98;width:36px;text-align:center;-webkit-text-stroke:0.5px currentColor">용품</div>
<div class="a " style="left:564px;top:204px;width:58px;height:27px;border:1px solid #dcdfe8;border-radius:3px"></div>
<div class="a t" style="left:564px;top:209.0px;line-height:17px;font-size:10.8px;font-weight:400;color:#7e8a98;width:58px;text-align:center;-webkit-text-stroke:0.5px currentColor">대체문구</div>
<div class="a " style="left:630px;top:204px;width:36px;height:27px;border:1px solid #dcdfe8;border-radius:3px"></div>
<div class="a t" style="left:630px;top:209.0px;line-height:17px;font-size:10.8px;font-weight:400;color:#7e8a98;width:36px;text-align:center;-webkit-text-stroke:0.5px currentColor">기타</div>
<div class="a " style="left:675px;top:204px;width:36px;height:27px;border:1px solid #dcdfe8;border-radius:3px"></div>
<div class="a t" style="left:675px;top:209.0px;line-height:17px;font-size:10.8px;font-weight:400;color:#7e8a98;width:36px;text-align:center;-webkit-text-stroke:0.5px currentColor">검사</div>
<div class="a " style="left:720px;top:204px;width:36px;height:27px;border:1px solid #dcdfe8;border-radius:3px"></div>
<div class="a t" style="left:720px;top:209.0px;line-height:17px;font-size:10.8px;font-weight:400;color:#7e8a98;width:36px;text-align:center;-webkit-text-stroke:0.5px currentColor">미용</div>
<div class="a " style="left:275px;top:198px;width:35px;height:37.5px;border:4px solid #e3262b"></div>
<div class="a t" style="left:239px;top:246.5px;line-height:18px;font-size:11.8px;font-weight:700;color:#222;;-webkit-text-stroke:0.1px currentColor">폴더</div>
<div class="a " style="left:431px;top:243px;width:58px;height:25px;background:#118bf2;border-radius:3px"></div>
<div class="a t" style="left:431px;top:247.5px;line-height:16px;font-size:10.5px;font-weight:700;color:#fff;width:58px;text-align:center;letter-spacing:-0.4px;-webkit-text-stroke:0.1px currentColor">폴더 추가</div>
<div class="a" style="left:239px;top:278px;width:250px;height:762px;overflow:hidden">
<div class="a" style="left:0;top:0px;width:240px;height:34px;border:1px solid #dcdfe8;border-radius:5px"></div>
<svg class="a" style="left:10px;top:10px" width="14" height="14" viewBox="0 0 18 15" preserveAspectRatio="none"><path d="M0 1.6C0 0.7 0.7 0 1.6 0H6.5L8.3 2H16.4C17.3 2 18 2.7 18 3.6V13.4C18 14.3 17.3 15 16.4 15H1.6C0.7 15 0 14.3 0 13.4Z" fill="#ffa5a5"/><rect x="0" y="4" width="18" height="1.3" fill="#fff"/></svg>
<div class="a t" style="left:32px;top:7px;line-height:20px;font-size:11.1px;color:#222">미분류 그룹</div>
<div class="a" style="left:0;top:44px;width:240px;height:34px;border:1px solid #dcdfe8;border-radius:5px"></div>
<svg class="a" style="left:13px;top:56px" width="6" height="10"><path d="M0 0L6 5L0 10Z" fill="#c6c9ce"/></svg>
<svg class="a" style="left:29px;top:54px" width="14.5" height="14" viewBox="0 0 18 15" preserveAspectRatio="none"><path d="M0 1.6C0 0.7 0.7 0 1.6 0H6.5L8.3 2H16.4C17.3 2 18 2.7 18 3.6V13.4C18 14.3 17.3 15 16.4 15H1.6C0.7 15 0 14.3 0 13.4Z" fill="#1769d3"/><rect x="0" y="4" width="18" height="1.3" fill="#fff"/></svg>
<div class="a t" style="left:51px;top:51px;line-height:20px;font-size:12.9px;color:#222">14.Anthelmintics</div>
<div class="a" style="left:0;top:88px;width:240px;height:34px;border:1px solid #dcdfe8;border-radius:5px"></div>
<svg class="a" style="left:13px;top:100px" width="6" height="10"><path d="M0 0L6 5L0 10Z" fill="#c6c9ce"/></svg>
<svg class="a" style="left:29px;top:98px" width="14.5" height="14" viewBox="0 0 18 15" preserveAspectRatio="none"><path d="M0 1.6C0 0.7 0.7 0 1.6 0H6.5L8.3 2H16.4C17.3 2 18 2.7 18 3.6V13.4C18 14.3 17.3 15 16.4 15H1.6C0.7 15 0 14.3 0 13.4Z" fill="#1769d3"/><rect x="0" y="4" width="18" height="1.3" fill="#fff"/></svg>
<div class="a t" style="left:51px;top:95px;line-height:20px;font-size:12.9px;color:#222">01.Antibiotics</div>
<div class="a" style="left:0;top:132px;width:240px;height:34px;border:1px solid #dcdfe8;border-radius:5px"></div>
<svg class="a" style="left:13px;top:144px" width="6" height="10"><path d="M0 0L6 5L0 10Z" fill="#c6c9ce"/></svg>
<svg class="a" style="left:29px;top:142px" width="14.5" height="14" viewBox="0 0 18 15" preserveAspectRatio="none"><path d="M0 1.6C0 0.7 0.7 0 1.6 0H6.5L8.3 2H16.4C17.3 2 18 2.7 18 3.6V13.4C18 14.3 17.3 15 16.4 15H1.6C0.7 15 0 14.3 0 13.4Z" fill="#1769d3"/><rect x="0" y="4" width="18" height="1.3" fill="#fff"/></svg>
<div class="a t" style="left:51px;top:139px;line-height:20px;font-size:12.9px;color:#222">02.Anti-inflamatory</div>
<div class="a" style="left:0;top:176px;width:240px;height:34px;border:1px solid #dcdfe8;border-radius:5px"></div>
<svg class="a" style="left:13px;top:188px" width="6" height="10"><path d="M0 0L6 5L0 10Z" fill="#c6c9ce"/></svg>
<svg class="a" style="left:29px;top:186px" width="14.5" height="14" viewBox="0 0 18 15" preserveAspectRatio="none"><path d="M0 1.6C0 0.7 0.7 0 1.6 0H6.5L8.3 2H16.4C17.3 2 18 2.7 18 3.6V13.4C18 14.3 17.3 15 16.4 15H1.6C0.7 15 0 14.3 0 13.4Z" fill="#1769d3"/><rect x="0" y="4" width="18" height="1.3" fill="#fff"/></svg>
<div class="a t" style="left:51px;top:183px;line-height:20px;font-size:12.9px;color:#222">03.Digestive</div>
<div class="a" style="left:0;top:220px;width:240px;height:34px;border:1px solid #dcdfe8;border-radius:5px"></div>
<svg class="a" style="left:13px;top:232px" width="6" height="10"><path d="M0 0L6 5L0 10Z" fill="#c6c9ce"/></svg>
<svg class="a" style="left:29px;top:230px" width="14.5" height="14" viewBox="0 0 18 15" preserveAspectRatio="none"><path d="M0 1.6C0 0.7 0.7 0 1.6 0H6.5L8.3 2H16.4C17.3 2 18 2.7 18 3.6V13.4C18 14.3 17.3 15 16.4 15H1.6C0.7 15 0 14.3 0 13.4Z" fill="#1769d3"/><rect x="0" y="4" width="18" height="1.3" fill="#fff"/></svg>
<div class="a t" style="left:51px;top:227px;line-height:20px;font-size:12.9px;color:#222">04.Respiratory</div>
<div class="a" style="left:0;top:264px;width:240px;height:34px;border:1px solid #dcdfe8;border-radius:5px"></div>
<svg class="a" style="left:13px;top:276px" width="6" height="10"><path d="M0 0L6 5L0 10Z" fill="#c6c9ce"/></svg>
<svg class="a" style="left:29px;top:274px" width="14.5" height="14" viewBox="0 0 18 15" preserveAspectRatio="none"><path d="M0 1.6C0 0.7 0.7 0 1.6 0H6.5L8.3 2H16.4C17.3 2 18 2.7 18 3.6V13.4C18 14.3 17.3 15 16.4 15H1.6C0.7 15 0 14.3 0 13.4Z" fill="#1769d3"/><rect x="0" y="4" width="18" height="1.3" fill="#fff"/></svg>
<div class="a t" style="left:51px;top:271px;line-height:20px;font-size:12.9px;color:#222">05.Cardiovascular</div>
<div class="a" style="left:0;top:308px;width:240px;height:34px;border:1px solid #dcdfe8;border-radius:5px"></div>
<svg class="a" style="left:13px;top:320px" width="6" height="10"><path d="M0 0L6 5L0 10Z" fill="#c6c9ce"/></svg>
<svg class="a" style="left:29px;top:318px" width="14.5" height="14" viewBox="0 0 18 15" preserveAspectRatio="none"><path d="M0 1.6C0 0.7 0.7 0 1.6 0H6.5L8.3 2H16.4C17.3 2 18 2.7 18 3.6V13.4C18 14.3 17.3 15 16.4 15H1.6C0.7 15 0 14.3 0 13.4Z" fill="#1769d3"/><rect x="0" y="4" width="18" height="1.3" fill="#fff"/></svg>
<div class="a t" style="left:51px;top:315px;line-height:20px;font-size:12.9px;color:#222">06.Dermatology</div>
<div class="a" style="left:0;top:352px;width:240px;height:34px;border:1px solid #dcdfe8;border-radius:5px"></div>
<svg class="a" style="left:13px;top:364px" width="6" height="10"><path d="M0 0L6 5L0 10Z" fill="#c6c9ce"/></svg>
<svg class="a" style="left:29px;top:362px" width="14.5" height="14" viewBox="0 0 18 15" preserveAspectRatio="none"><path d="M0 1.6C0 0.7 0.7 0 1.6 0H6.5L8.3 2H16.4C17.3 2 18 2.7 18 3.6V13.4C18 14.3 17.3 15 16.4 15H1.6C0.7 15 0 14.3 0 13.4Z" fill="#1769d3"/><rect x="0" y="4" width="18" height="1.3" fill="#fff"/></svg>
<div class="a t" style="left:51px;top:359px;line-height:20px;font-size:12.9px;color:#222">07.Opthalmic</div>
<div class="a" style="left:0;top:396px;width:240px;height:34px;border:1px solid #dcdfe8;border-radius:5px"></div>
<svg class="a" style="left:13px;top:408px" width="6" height="10"><path d="M0 0L6 5L0 10Z" fill="#c6c9ce"/></svg>
<svg class="a" style="left:29px;top:406px" width="14.5" height="14" viewBox="0 0 18 15" preserveAspectRatio="none"><path d="M0 1.6C0 0.7 0.7 0 1.6 0H6.5L8.3 2H16.4C17.3 2 18 2.7 18 3.6V13.4C18 14.3 17.3 15 16.4 15H1.6C0.7 15 0 14.3 0 13.4Z" fill="#1769d3"/><rect x="0" y="4" width="18" height="1.3" fill="#fff"/></svg>
<div class="a t" style="left:51px;top:403px;line-height:20px;font-size:12.9px;color:#222">08.Obstetrics</div>
<div class="a" style="left:0;top:440px;width:240px;height:34px;border:1px solid #dcdfe8;border-radius:5px"></div>
<svg class="a" style="left:13px;top:452px" width="6" height="10"><path d="M0 0L6 5L0 10Z" fill="#c6c9ce"/></svg>
<svg class="a" style="left:29px;top:450px" width="14.5" height="14" viewBox="0 0 18 15" preserveAspectRatio="none"><path d="M0 1.6C0 0.7 0.7 0 1.6 0H6.5L8.3 2H16.4C17.3 2 18 2.7 18 3.6V13.4C18 14.3 17.3 15 16.4 15H1.6C0.7 15 0 14.3 0 13.4Z" fill="#1769d3"/><rect x="0" y="4" width="18" height="1.3" fill="#fff"/></svg>
<div class="a t" style="left:51px;top:447px;line-height:20px;font-size:12.9px;color:#222">09.Liver</div>
<div class="a" style="left:0;top:484px;width:240px;height:34px;border:1px solid #dcdfe8;border-radius:5px"></div>
<svg class="a" style="left:13px;top:496px" width="6" height="10"><path d="M0 0L6 5L0 10Z" fill="#c6c9ce"/></svg>
<svg class="a" style="left:29px;top:494px" width="14.5" height="14" viewBox="0 0 18 15" preserveAspectRatio="none"><path d="M0 1.6C0 0.7 0.7 0 1.6 0H6.5L8.3 2H16.4C17.3 2 18 2.7 18 3.6V13.4C18 14.3 17.3 15 16.4 15H1.6C0.7 15 0 14.3 0 13.4Z" fill="#1769d3"/><rect x="0" y="4" width="18" height="1.3" fill="#fff"/></svg>
<div class="a t" style="left:51px;top:491px;line-height:20px;font-size:12.9px;color:#222">12.Analgesics</div>
<div class="a" style="left:0;top:528px;width:240px;height:34px;border:1px solid #dcdfe8;border-radius:5px"></div>
<svg class="a" style="left:13px;top:540px" width="6" height="10"><path d="M0 0L6 5L0 10Z" fill="#c6c9ce"/></svg>
<svg class="a" style="left:29px;top:538px" width="14.5" height="14" viewBox="0 0 18 15" preserveAspectRatio="none"><path d="M0 1.6C0 0.7 0.7 0 1.6 0H6.5L8.3 2H16.4C17.3 2 18 2.7 18 3.6V13.4C18 14.3 17.3 15 16.4 15H1.6C0.7 15 0 14.3 0 13.4Z" fill="#1769d3"/><rect x="0" y="4" width="18" height="1.3" fill="#fff"/></svg>
<div class="a t" style="left:51px;top:535px;line-height:20px;font-size:12.9px;color:#222">10.Hormone</div>
<div class="a" style="left:0;top:572px;width:240px;height:34px;border:1px solid #dcdfe8;border-radius:5px"></div>
<svg class="a" style="left:13px;top:584px" width="6" height="10"><path d="M0 0L6 5L0 10Z" fill="#c6c9ce"/></svg>
<svg class="a" style="left:29px;top:582px" width="14.5" height="14" viewBox="0 0 18 15" preserveAspectRatio="none"><path d="M0 1.6C0 0.7 0.7 0 1.6 0H6.5L8.3 2H16.4C17.3 2 18 2.7 18 3.6V13.4C18 14.3 17.3 15 16.4 15H1.6C0.7 15 0 14.3 0 13.4Z" fill="#1769d3"/><rect x="0" y="4" width="18" height="1.3" fill="#fff"/></svg>
<div class="a t" style="left:51px;top:579px;line-height:20px;font-size:12.9px;color:#222">11.Fluid</div>
<div class="a" style="left:0;top:616px;width:240px;height:34px;border:1px solid #dcdfe8;border-radius:5px"></div>
<svg class="a" style="left:13px;top:628px" width="6" height="10"><path d="M0 0L6 5L0 10Z" fill="#c6c9ce"/></svg>
<svg class="a" style="left:29px;top:626px" width="14.5" height="14" viewBox="0 0 18 15" preserveAspectRatio="none"><path d="M0 1.6C0 0.7 0.7 0 1.6 0H6.5L8.3 2H16.4C17.3 2 18 2.7 18 3.6V13.4C18 14.3 17.3 15 16.4 15H1.6C0.7 15 0 14.3 0 13.4Z" fill="#1769d3"/><rect x="0" y="4" width="18" height="1.3" fill="#fff"/></svg>
<div class="a t" style="left:51px;top:623px;line-height:20px;font-size:12.9px;color:#222">13.Neurology</div>
<div class="a" style="left:0;top:660px;width:240px;height:34px;border:1px solid #dcdfe8;border-radius:5px"></div>
<svg class="a" style="left:13px;top:672px" width="6" height="10"><path d="M0 0L6 5L0 10Z" fill="#c6c9ce"/></svg>
<svg class="a" style="left:29px;top:670px" width="14.5" height="14" viewBox="0 0 18 15" preserveAspectRatio="none"><path d="M0 1.6C0 0.7 0.7 0 1.6 0H6.5L8.3 2H16.4C17.3 2 18 2.7 18 3.6V13.4C18 14.3 17.3 15 16.4 15H1.6C0.7 15 0 14.3 0 13.4Z" fill="#1769d3"/><rect x="0" y="4" width="18" height="1.3" fill="#fff"/></svg>
<div class="a t" style="left:51px;top:667px;line-height:20px;font-size:12.9px;color:#222">15.Urinary</div>
<div class="a" style="left:0;top:704px;width:240px;height:34px;border:1px solid #dcdfe8;border-radius:5px"></div>
<svg class="a" style="left:13px;top:716px" width="6" height="10"><path d="M0 0L6 5L0 10Z" fill="#c6c9ce"/></svg>
<svg class="a" style="left:29px;top:714px" width="14.5" height="14" viewBox="0 0 18 15" preserveAspectRatio="none"><path d="M0 1.6C0 0.7 0.7 0 1.6 0H6.5L8.3 2H16.4C17.3 2 18 2.7 18 3.6V13.4C18 14.3 17.3 15 16.4 15H1.6C0.7 15 0 14.3 0 13.4Z" fill="#1769d3"/><rect x="0" y="4" width="18" height="1.3" fill="#fff"/></svg>
<div class="a t" style="left:51px;top:711px;line-height:20px;font-size:12.9px;color:#222">16.Supplement</div>
<div class="a" style="left:0;top:748px;width:240px;height:34px;border:1px solid #dcdfe8;border-radius:5px"></div>
<svg class="a" style="left:13px;top:760px" width="6" height="10"><path d="M0 0L6 5L0 10Z" fill="#c6c9ce"/></svg>
<svg class="a" style="left:29px;top:758px" width="14.5" height="14" viewBox="0 0 18 15" preserveAspectRatio="none"><path d="M0 1.6C0 0.7 0.7 0 1.6 0H6.5L8.3 2H16.4C17.3 2 18 2.7 18 3.6V13.4C18 14.3 17.3 15 16.4 15H1.6C0.7 15 0 14.3 0 13.4Z" fill="#1769d3"/><rect x="0" y="4" width="18" height="1.3" fill="#fff"/></svg>
<div class="a t" style="left:51px;top:755px;line-height:20px;font-size:12.9px;color:#222">17.Antidotics</div>
</div>
<div class="a " style="left:484px;top:278px;width:5px;height:762px;background:#e4e6ee"></div>
<div class="a " style="left:484px;top:278px;width:5px;height:660px;background:#a3aab3"></div>
<div class="a " style="left:504px;top:243px;width:1px;height:797px;background:#dcdfe8"></div>
<div class="a t" style="left:519px;top:246.0px;line-height:19px;font-size:11.9px;font-weight:700;color:#222;;-webkit-text-stroke:0.1px currentColor">코드</div>
<div class="a " style="left:551px;top:243px;width:194px;height:25px;background:#eceef5;border-radius:4px"></div>
<div class="a t" style="left:557px;top:247.5px;line-height:16px;font-size:10.3px;font-weight:400;color:#aeb3bb;letter-spacing:0.55px">이름으로 검색</div>
<svg class="a" style="left:724px;top:247px;" width="16" height="16" viewBox="0 0 16 16"><circle cx="6.5" cy="6.5" r="4.6" fill="none" stroke="#4f555c" stroke-width="1.8"/><path d="M10 10L14 14" stroke="#4f555c" stroke-width="2"/></svg>
<div class="a " style="left:753px;top:246px;width:20px;height:20px;background:#eceef5;border-radius:3px"></div>
<svg class="a" style="left:757px;top:251px;" width="12" height="10" viewBox="0 0 12 10"><path d="M1 5L4.5 8.5L11 1.5" fill="none" stroke="#8b929c" stroke-width="1.5"/></svg>
<div class="a t" style="left:779.5px;top:247.5px;line-height:16px;font-size:10.4px;font-weight:400;color:#222;letter-spacing:0.46px">사용 중인 코드만 보기</div>
<div class="a " style="left:1161px;top:243px;width:58px;height:25px;background:#118bf2;border-radius:3px"></div>
<div class="a t" style="left:1161px;top:247.5px;line-height:16px;font-size:10.5px;font-weight:700;color:#fff;width:58px;text-align:center;letter-spacing:-0.4px;-webkit-text-stroke:0.1px currentColor">코드 추가</div>
<div class="a" style="left:519px;top:278px;width:700px;height:762px;overflow:hidden">
<div class="a" style="left:0;top:0;width:666px;height:30px;background:#eceef5;border:1px solid #dcdfe8;border-right:none"></div>
<div class="a t" style="left:6px;top:5px;line-height:20px;font-size:9.6px;font-weight:700;color:#222;">그룹</div>
<div class="a t" style="left:126px;top:5px;line-height:20px;font-size:9.6px;font-weight:700;color:#222;">코드</div>
<div class="a t" style="left:186px;top:5px;line-height:20px;font-size:9.6px;font-weight:700;color:#222;">이름</div>
<div class="a t" style="left:456px;top:5px;line-height:20px;font-size:9.6px;font-weight:700;color:#222;">금액</div>
<div class="a t" style="left:516px;top:5px;line-height:20px;font-size:9.6px;font-weight:700;color:#222;letter-spacing:-0.75px;">과세 종류</div>
<div class="a t" style="left:566px;top:5px;line-height:20px;font-size:9.6px;font-weight:700;color:#222;">단위</div>
<div class="a t" style="left:626px;top:5px;line-height:20px;font-size:9.6px;font-weight:700;color:#222;">용법</div>
<div class="a" style="left:0;top:30px;width:666px;height:31px;background:#fff;border:1px solid #dcdfe8;border-right:none"></div>
<div class="a t" style="left:6px;top:35px;line-height:20px;font-size:11px;color:#222">01.Antibiotics</div>
<div class="a t" style="left:126px;top:35px;line-height:20px;font-size:11px;color:#222">ANB011</div>
<div class="a t" style="left:186px;top:35px;line-height:20px;font-size:11px;color:#222">Ampicillin + sulbactam Inj.</div>
<div class="a t" style="left:450px;top:35px;width:54px;text-align:right;line-height:20px;font-size:11.5px;color:#222">0</div>
<div class="a t" style="left:516px;top:35px;line-height:20px;font-size:9.6px;color:#222">과세</div>
<div class="a t" style="left:566px;top:35px;line-height:20px;font-size:11.4px;color:#222">mg/kg</div>
<div class="a t" style="left:626px;top:35px;line-height:20px;font-size:11.2px;color:#222">IM</div>
<svg class="a" style="left:672px;top:37px" width="16" height="16" viewBox="0 0 16 15"><path d="M8 0.9L10.1 5.3L14.9 5.8L11.3 9.1L12.3 13.9L8 11.5L3.7 13.9L4.7 9.1L1.1 5.8L5.9 5.3Z" fill="#f7c31a" stroke="#2b2b2b" stroke-width="1.1" stroke-linejoin="round"/></svg>
<div class="a" style="left:0;top:60px;width:666px;height:31px;background:#fff;border:1px solid #dcdfe8;border-right:none"></div>
<div class="a t" style="left:6px;top:65px;line-height:20px;font-size:11px;color:#222">01.Antibiotics</div>
<div class="a t" style="left:126px;top:65px;line-height:20px;font-size:11px;color:#222">ANB012</div>
<div class="a t" style="left:186px;top:65px;line-height:20px;font-size:11px;color:#222">Azidothymidine Tab.</div>
<div class="a t" style="left:450px;top:65px;width:54px;text-align:right;line-height:20px;font-size:11.5px;color:#222">0</div>
<div class="a t" style="left:516px;top:65px;line-height:20px;font-size:9.6px;color:#222">과세</div>
<div class="a t" style="left:566px;top:65px;line-height:20px;font-size:11.4px;color:#222">mg/kg</div>
<div class="a t" style="left:626px;top:65px;line-height:20px;font-size:11.2px;color:#222">PO</div>
<svg class="a" style="left:672px;top:67px" width="16" height="16" viewBox="0 0 16 15"><path d="M8 0.9L10.1 5.3L14.9 5.8L11.3 9.1L12.3 13.9L8 11.5L3.7 13.9L4.7 9.1L1.1 5.8L5.9 5.3Z" fill="#f7c31a" stroke="#2b2b2b" stroke-width="1.1" stroke-linejoin="round"/></svg>
<div class="a" style="left:0;top:90px;width:666px;height:31px;background:#fff;border:1px solid #dcdfe8;border-right:none"></div>
<div class="a t" style="left:6px;top:95px;line-height:20px;font-size:11px;color:#222">14.Anthelmintics</div>
<div class="a t" style="left:126px;top:95px;line-height:20px;font-size:11px;color:#222">ANT001</div>
<div class="a t" style="left:186px;top:95px;line-height:20px;font-size:11px;color:#222">Atovaquone Sol.</div>
<div class="a t" style="left:450px;top:95px;width:54px;text-align:right;line-height:20px;font-size:11.5px;color:#222">0</div>
<div class="a t" style="left:516px;top:95px;line-height:20px;font-size:9.6px;color:#222">과세</div>
<div class="a t" style="left:566px;top:95px;line-height:20px;font-size:11.4px;color:#222">mg/kg</div>
<div class="a t" style="left:626px;top:95px;line-height:20px;font-size:11.2px;color:#222">PO</div>
<svg class="a" style="left:672px;top:97px" width="16" height="16" viewBox="0 0 16 15"><path d="M8 0.9L10.1 5.3L14.9 5.8L11.3 9.1L12.3 13.9L8 11.5L3.7 13.9L4.7 9.1L1.1 5.8L5.9 5.3Z" fill="#f7c31a" stroke="#2b2b2b" stroke-width="1.1" stroke-linejoin="round"/></svg>
<div class="a" style="left:0;top:120px;width:666px;height:31px;background:#fff;border:1px solid #dcdfe8;border-right:none"></div>
<div class="a t" style="left:6px;top:125px;line-height:20px;font-size:11px;color:#222">14.Anthelmintics</div>
<div class="a t" style="left:126px;top:125px;line-height:20px;font-size:11px;color:#222">ANT013</div>
<div class="a t" style="left:186px;top:125px;line-height:20px;font-size:11px;color:#222">Febantel 37.5mg/ Pyrantel parmoate 36.0mg/ Prazi...</div>
<div class="a t" style="left:450px;top:125px;width:54px;text-align:right;line-height:20px;font-size:11.5px;color:#222">0</div>
<div class="a t" style="left:516px;top:125px;line-height:20px;font-size:9.6px;color:#222">과세</div>
<div class="a t" style="left:566px;top:125px;line-height:20px;font-size:11.4px;color:#222">T/kg</div>
<div class="a t" style="left:626px;top:125px;line-height:20px;font-size:11.2px;color:#222">PO</div>
<svg class="a" style="left:672px;top:127px" width="16" height="16" viewBox="0 0 16 15"><path d="M8 0.9L10.1 5.3L14.9 5.8L11.3 9.1L12.3 13.9L8 11.5L3.7 13.9L4.7 9.1L1.1 5.8L5.9 5.3Z" fill="#f7c31a" stroke="#2b2b2b" stroke-width="1.1" stroke-linejoin="round"/></svg>
<div class="a" style="left:0;top:150px;width:666px;height:31px;background:#fff;border:1px solid #dcdfe8;border-right:none"></div>
<div class="a t" style="left:6px;top:155px;line-height:20px;font-size:11px;color:#222">01.Antibiotics</div>
<div class="a t" style="left:126px;top:155px;line-height:20px;font-size:11px;color:#222">ANB001</div>
<div class="a t" style="left:186px;top:155px;line-height:20px;font-size:11px;color:#222">6-Mercaptopurine (Purinethol) Tab.</div>
<div class="a t" style="left:450px;top:155px;width:54px;text-align:right;line-height:20px;font-size:11.5px;color:#222">0</div>
<div class="a t" style="left:516px;top:155px;line-height:20px;font-size:9.6px;color:#222">과세</div>
<div class="a t" style="left:566px;top:155px;line-height:20px;font-size:11.4px;color:#222">mg/m²</div>
<div class="a t" style="left:626px;top:155px;line-height:20px;font-size:11.2px;color:#222">PO</div>
<svg class="a" style="left:672px;top:157px" width="16" height="16" viewBox="0 0 16 15"><path d="M8 0.9L10.1 5.3L14.9 5.8L11.3 9.1L12.3 13.9L8 11.5L3.7 13.9L4.7 9.1L1.1 5.8L5.9 5.3Z" fill="none" stroke="#5b6370" stroke-width="1.1" stroke-linejoin="round"/></svg>
<div class="a" style="left:0;top:180px;width:666px;height:31px;background:#bee9fc;border:1px solid #dcdfe8;border-right:none"></div>
<div class="a t" style="left:6px;top:185px;line-height:20px;font-size:11px;color:#222">01.Antibiotics</div>
<div class="a t" style="left:126px;top:185px;line-height:20px;font-size:11px;color:#222">ANB002</div>
<div class="a t" style="left:186px;top:185px;line-height:20px;font-size:11px;color:#222">Actinomycin D Inj.</div>
<div class="a t" style="left:450px;top:185px;width:54px;text-align:right;line-height:20px;font-size:11.5px;color:#222">0</div>
<div class="a t" style="left:516px;top:185px;line-height:20px;font-size:9.6px;color:#222">과세</div>
<div class="a t" style="left:566px;top:185px;line-height:20px;font-size:11.4px;color:#222">mg/m²</div>
<div class="a t" style="left:626px;top:185px;line-height:20px;font-size:11.2px;color:#222">IV</div>
<svg class="a" style="left:672px;top:187px" width="16" height="16" viewBox="0 0 16 15"><path d="M8 0.9L10.1 5.3L14.9 5.8L11.3 9.1L12.3 13.9L8 11.5L3.7 13.9L4.7 9.1L1.1 5.8L5.9 5.3Z" fill="none" stroke="#5b6370" stroke-width="1.1" stroke-linejoin="round"/></svg>
<div class="a" style="left:0;top:210px;width:666px;height:31px;background:#fff;border:1px solid #dcdfe8;border-right:none"></div>
<div class="a t" style="left:6px;top:215px;line-height:20px;font-size:11px;color:#222">01.Antibiotics</div>
<div class="a t" style="left:126px;top:215px;line-height:20px;font-size:11px;color:#222">ANB003</div>
<div class="a t" style="left:186px;top:215px;line-height:20px;font-size:11px;color:#222">Amikacin Inj.</div>
<div class="a t" style="left:450px;top:215px;width:54px;text-align:right;line-height:20px;font-size:11.5px;color:#222">0</div>
<div class="a t" style="left:516px;top:215px;line-height:20px;font-size:9.6px;color:#222">과세</div>
<div class="a t" style="left:566px;top:215px;line-height:20px;font-size:11.4px;color:#222">mg/kg</div>
<div class="a t" style="left:626px;top:215px;line-height:20px;font-size:11.2px;color:#222">IV</div>
<svg class="a" style="left:672px;top:217px" width="16" height="16" viewBox="0 0 16 15"><path d="M8 0.9L10.1 5.3L14.9 5.8L11.3 9.1L12.3 13.9L8 11.5L3.7 13.9L4.7 9.1L1.1 5.8L5.9 5.3Z" fill="none" stroke="#5b6370" stroke-width="1.1" stroke-linejoin="round"/></svg>
<div class="a" style="left:0;top:240px;width:666px;height:31px;background:#fff;border:1px solid #dcdfe8;border-right:none"></div>
<div class="a t" style="left:6px;top:245px;line-height:20px;font-size:11px;color:#222">01.Antibiotics</div>
<div class="a t" style="left:126px;top:245px;line-height:20px;font-size:11px;color:#222">ANB004</div>
<div class="a t" style="left:186px;top:245px;line-height:20px;font-size:11px;color:#222">Amoxicillin Cap. (<span style="font-size:10px;letter-spacing:-1px">아목시실린</span>)</div>
<div class="a t" style="left:450px;top:245px;width:54px;text-align:right;line-height:20px;font-size:11.5px;color:#222">500</div>
<div class="a t" style="left:516px;top:245px;line-height:20px;font-size:9.6px;color:#222">과세</div>
<div class="a t" style="left:566px;top:245px;line-height:20px;font-size:11.4px;color:#222">mg/kg</div>
<div class="a t" style="left:626px;top:245px;line-height:20px;font-size:11.2px;color:#222">PO</div>
<svg class="a" style="left:672px;top:247px" width="16" height="16" viewBox="0 0 16 15"><path d="M8 0.9L10.1 5.3L14.9 5.8L11.3 9.1L12.3 13.9L8 11.5L3.7 13.9L4.7 9.1L1.1 5.8L5.9 5.3Z" fill="none" stroke="#5b6370" stroke-width="1.1" stroke-linejoin="round"/></svg>
<div class="a" style="left:0;top:270px;width:666px;height:31px;background:#fff;border:1px solid #dcdfe8;border-right:none"></div>
<div class="a t" style="left:6px;top:275px;line-height:20px;font-size:11px;color:#222">01.Antibiotics</div>
<div class="a t" style="left:126px;top:275px;line-height:20px;font-size:11px;color:#222">ANB005</div>
<div class="a t" style="left:186px;top:275px;line-height:20px;font-size:11px;color:#222">Amoxicillin Inj.</div>
<div class="a t" style="left:450px;top:275px;width:54px;text-align:right;line-height:20px;font-size:11.5px;color:#222">0</div>
<div class="a t" style="left:516px;top:275px;line-height:20px;font-size:9.6px;color:#222">과세</div>
<div class="a t" style="left:566px;top:275px;line-height:20px;font-size:11.4px;color:#222">mg/kg</div>
<div class="a t" style="left:626px;top:275px;line-height:20px;font-size:11.2px;color:#222">SC</div>
<svg class="a" style="left:672px;top:277px" width="16" height="16" viewBox="0 0 16 15"><path d="M8 0.9L10.1 5.3L14.9 5.8L11.3 9.1L12.3 13.9L8 11.5L3.7 13.9L4.7 9.1L1.1 5.8L5.9 5.3Z" fill="none" stroke="#5b6370" stroke-width="1.1" stroke-linejoin="round"/></svg>
<div class="a" style="left:0;top:300px;width:666px;height:31px;background:#fff;border:1px solid #dcdfe8;border-right:none"></div>
<div class="a t" style="left:6px;top:305px;line-height:20px;font-size:11px;color:#222">01.Antibiotics</div>
<div class="a t" style="left:126px;top:305px;line-height:20px;font-size:11px;color:#222">ANB006</div>
<div class="a t" style="left:186px;top:305px;line-height:20px;font-size:11px;color:#222">Amocla(AMC,Amoxicillin/Clavulanic acid) tab.</div>
<div class="a t" style="left:450px;top:305px;width:54px;text-align:right;line-height:20px;font-size:11.5px;color:#222">0</div>
<div class="a t" style="left:516px;top:305px;line-height:20px;font-size:9.6px;color:#222">과세</div>
<div class="a t" style="left:566px;top:305px;line-height:20px;font-size:11.4px;color:#222">mg/kg</div>
<div class="a t" style="left:626px;top:305px;line-height:20px;font-size:11.2px;color:#222">PO</div>
<svg class="a" style="left:672px;top:307px" width="16" height="16" viewBox="0 0 16 15"><path d="M8 0.9L10.1 5.3L14.9 5.8L11.3 9.1L12.3 13.9L8 11.5L3.7 13.9L4.7 9.1L1.1 5.8L5.9 5.3Z" fill="none" stroke="#5b6370" stroke-width="1.1" stroke-linejoin="round"/></svg>
<div class="a" style="left:0;top:330px;width:666px;height:31px;background:#fff;border:1px solid #dcdfe8;border-right:none"></div>
<div class="a t" style="left:6px;top:335px;line-height:20px;font-size:11px;color:#222">01.Antibiotics</div>
<div class="a t" style="left:126px;top:335px;line-height:20px;font-size:11px;color:#222">ANB007</div>
<div class="a t" style="left:186px;top:335px;line-height:20px;font-size:11px;color:#222">Amphotericin B Inj.</div>
<div class="a t" style="left:450px;top:335px;width:54px;text-align:right;line-height:20px;font-size:11.5px;color:#222">0</div>
<div class="a t" style="left:516px;top:335px;line-height:20px;font-size:9.6px;color:#222">과세</div>
<div class="a t" style="left:566px;top:335px;line-height:20px;font-size:11.4px;color:#222">mg/kg</div>
<div class="a t" style="left:626px;top:335px;line-height:20px;font-size:11.2px;color:#222">IV</div>
<svg class="a" style="left:672px;top:337px" width="16" height="16" viewBox="0 0 16 15"><path d="M8 0.9L10.1 5.3L14.9 5.8L11.3 9.1L12.3 13.9L8 11.5L3.7 13.9L4.7 9.1L1.1 5.8L5.9 5.3Z" fill="none" stroke="#5b6370" stroke-width="1.1" stroke-linejoin="round"/></svg>
<div class="a" style="left:0;top:360px;width:666px;height:31px;background:#fff;border:1px solid #dcdfe8;border-right:none"></div>
<div class="a t" style="left:6px;top:365px;line-height:20px;font-size:11px;color:#222">01.Antibiotics</div>
<div class="a t" style="left:126px;top:365px;line-height:20px;font-size:11px;color:#222">ANB008</div>
<div class="a t" style="left:186px;top:365px;line-height:20px;font-size:11px;color:#222">Amphotericin B, liposomal encapsulated Inj.</div>
<div class="a t" style="left:450px;top:365px;width:54px;text-align:right;line-height:20px;font-size:11.5px;color:#222">0</div>
<div class="a t" style="left:516px;top:365px;line-height:20px;font-size:9.6px;color:#222">과세</div>
<div class="a t" style="left:566px;top:365px;line-height:20px;font-size:11.4px;color:#222">mg/kg</div>
<div class="a t" style="left:626px;top:365px;line-height:20px;font-size:11.2px;color:#222">IV</div>
<svg class="a" style="left:672px;top:367px" width="16" height="16" viewBox="0 0 16 15"><path d="M8 0.9L10.1 5.3L14.9 5.8L11.3 9.1L12.3 13.9L8 11.5L3.7 13.9L4.7 9.1L1.1 5.8L5.9 5.3Z" fill="none" stroke="#5b6370" stroke-width="1.1" stroke-linejoin="round"/></svg>
<div class="a" style="left:0;top:390px;width:666px;height:31px;background:#fff;border:1px solid #dcdfe8;border-right:none"></div>
<div class="a t" style="left:6px;top:395px;line-height:20px;font-size:11px;color:#222">01.Antibiotics</div>
<div class="a t" style="left:126px;top:395px;line-height:20px;font-size:11px;color:#222">ANB009</div>
<div class="a t" style="left:186px;top:395px;line-height:20px;font-size:11px;color:#222">Ampicillin Cap.</div>
<div class="a t" style="left:450px;top:395px;width:54px;text-align:right;line-height:20px;font-size:11.5px;color:#222">0</div>
<div class="a t" style="left:516px;top:395px;line-height:20px;font-size:9.6px;color:#222">과세</div>
<div class="a t" style="left:566px;top:395px;line-height:20px;font-size:11.4px;color:#222">mg/kg</div>
<div class="a t" style="left:626px;top:395px;line-height:20px;font-size:11.2px;color:#222">PO</div>
<svg class="a" style="left:672px;top:397px" width="16" height="16" viewBox="0 0 16 15"><path d="M8 0.9L10.1 5.3L14.9 5.8L11.3 9.1L12.3 13.9L8 11.5L3.7 13.9L4.7 9.1L1.1 5.8L5.9 5.3Z" fill="none" stroke="#5b6370" stroke-width="1.1" stroke-linejoin="round"/></svg>
<div class="a" style="left:0;top:420px;width:666px;height:31px;background:#fff;border:1px solid #dcdfe8;border-right:none"></div>
<div class="a t" style="left:6px;top:425px;line-height:20px;font-size:11px;color:#222">01.Antibiotics</div>
<div class="a t" style="left:126px;top:425px;line-height:20px;font-size:11px;color:#222">ANB010</div>
<div class="a t" style="left:186px;top:425px;line-height:20px;font-size:11px;color:#222">Ampicillin Inj.</div>
<div class="a t" style="left:450px;top:425px;width:54px;text-align:right;line-height:20px;font-size:11.5px;color:#222">0</div>
<div class="a t" style="left:516px;top:425px;line-height:20px;font-size:9.6px;color:#222">과세</div>
<div class="a t" style="left:566px;top:425px;line-height:20px;font-size:11.4px;color:#222">mg/kg</div>
<div class="a t" style="left:626px;top:425px;line-height:20px;font-size:11.2px;color:#222">SC</div>
<svg class="a" style="left:672px;top:427px" width="16" height="16" viewBox="0 0 16 15"><path d="M8 0.9L10.1 5.3L14.9 5.8L11.3 9.1L12.3 13.9L8 11.5L3.7 13.9L4.7 9.1L1.1 5.8L5.9 5.3Z" fill="none" stroke="#5b6370" stroke-width="1.1" stroke-linejoin="round"/></svg>
<div class="a" style="left:0;top:450px;width:666px;height:31px;background:#fff;border:1px solid #dcdfe8;border-right:none"></div>
<div class="a t" style="left:6px;top:455px;line-height:20px;font-size:11px;color:#222">01.Antibiotics</div>
<div class="a t" style="left:126px;top:455px;line-height:20px;font-size:11px;color:#222">ANB013</div>
<div class="a t" style="left:186px;top:455px;line-height:20px;font-size:11px;color:#222">Azithromycin Tab.</div>
<div class="a t" style="left:450px;top:455px;width:54px;text-align:right;line-height:20px;font-size:11.5px;color:#222">0</div>
<div class="a t" style="left:516px;top:455px;line-height:20px;font-size:9.6px;color:#222">과세</div>
<div class="a t" style="left:566px;top:455px;line-height:20px;font-size:11.4px;color:#222">mg/kg</div>
<div class="a t" style="left:626px;top:455px;line-height:20px;font-size:11.2px;color:#222">PO</div>
<svg class="a" style="left:672px;top:457px" width="16" height="16" viewBox="0 0 16 15"><path d="M8 0.9L10.1 5.3L14.9 5.8L11.3 9.1L12.3 13.9L8 11.5L3.7 13.9L4.7 9.1L1.1 5.8L5.9 5.3Z" fill="none" stroke="#5b6370" stroke-width="1.1" stroke-linejoin="round"/></svg>
<div class="a" style="left:0;top:480px;width:666px;height:31px;background:#fff;border:1px solid #dcdfe8;border-right:none"></div>
<div class="a t" style="left:6px;top:485px;line-height:20px;font-size:11px;color:#222">01.Antibiotics</div>
<div class="a t" style="left:126px;top:485px;line-height:20px;font-size:11px;color:#222">ANB014</div>
<div class="a t" style="left:186px;top:485px;line-height:20px;font-size:11px;color:#222">Aztreonam Inj.</div>
<div class="a t" style="left:450px;top:485px;width:54px;text-align:right;line-height:20px;font-size:11.5px;color:#222">0</div>
<div class="a t" style="left:516px;top:485px;line-height:20px;font-size:9.6px;color:#222">과세</div>
<div class="a t" style="left:566px;top:485px;line-height:20px;font-size:11.4px;color:#222">mg/kg</div>
<div class="a t" style="left:626px;top:485px;line-height:20px;font-size:11.2px;color:#222">IV</div>
<svg class="a" style="left:672px;top:487px" width="16" height="16" viewBox="0 0 16 15"><path d="M8 0.9L10.1 5.3L14.9 5.8L11.3 9.1L12.3 13.9L8 11.5L3.7 13.9L4.7 9.1L1.1 5.8L5.9 5.3Z" fill="none" stroke="#5b6370" stroke-width="1.1" stroke-linejoin="round"/></svg>
<div class="a" style="left:0;top:510px;width:666px;height:31px;background:#fff;border:1px solid #dcdfe8;border-right:none"></div>
<div class="a t" style="left:6px;top:515px;line-height:20px;font-size:11px;color:#222">01.Antibiotics</div>
<div class="a t" style="left:126px;top:515px;line-height:20px;font-size:11px;color:#222">ANB015</div>
<div class="a t" style="left:186px;top:515px;line-height:20px;font-size:11px;color:#222">Bacitracin Oint.</div>
<div class="a t" style="left:450px;top:515px;width:54px;text-align:right;line-height:20px;font-size:11.5px;color:#222">0</div>
<div class="a t" style="left:516px;top:515px;line-height:20px;font-size:9.6px;color:#222">과세</div>
<div class="a t" style="left:566px;top:515px;line-height:20px;font-size:11.4px;color:#222">EA</div>
<div class="a t" style="left:626px;top:515px;line-height:20px;font-size:11.2px;color:#222">Skin</div>
<svg class="a" style="left:672px;top:517px" width="16" height="16" viewBox="0 0 16 15"><path d="M8 0.9L10.1 5.3L14.9 5.8L11.3 9.1L12.3 13.9L8 11.5L3.7 13.9L4.7 9.1L1.1 5.8L5.9 5.3Z" fill="none" stroke="#5b6370" stroke-width="1.1" stroke-linejoin="round"/></svg>
<div class="a" style="left:0;top:540px;width:666px;height:31px;background:#fff;border:1px solid #dcdfe8;border-right:none"></div>
<div class="a t" style="left:6px;top:545px;line-height:20px;font-size:11px;color:#222">01.Antibiotics</div>
<div class="a t" style="left:126px;top:545px;line-height:20px;font-size:11px;color:#222">ANB016</div>
<div class="a t" style="left:186px;top:545px;line-height:20px;font-size:11px;color:#222">Bleomycin Inj.</div>
<div class="a t" style="left:450px;top:545px;width:54px;text-align:right;line-height:20px;font-size:11.5px;color:#222">0</div>
<div class="a t" style="left:516px;top:545px;line-height:20px;font-size:9.6px;color:#222">과세</div>
<div class="a t" style="left:566px;top:545px;line-height:20px;font-size:11.4px;color:#222">U/m²</div>
<div class="a t" style="left:626px;top:545px;line-height:20px;font-size:11.2px;color:#222">SC</div>
<svg class="a" style="left:672px;top:547px" width="16" height="16" viewBox="0 0 16 15"><path d="M8 0.9L10.1 5.3L14.9 5.8L11.3 9.1L12.3 13.9L8 11.5L3.7 13.9L4.7 9.1L1.1 5.8L5.9 5.3Z" fill="none" stroke="#5b6370" stroke-width="1.1" stroke-linejoin="round"/></svg>
<div class="a" style="left:0;top:570px;width:666px;height:31px;background:#fff;border:1px solid #dcdfe8;border-right:none"></div>
<div class="a t" style="left:6px;top:575px;line-height:20px;font-size:11px;color:#222">01.Antibiotics</div>
<div class="a t" style="left:126px;top:575px;line-height:20px;font-size:11px;color:#222">ANB017</div>
<div class="a t" style="left:186px;top:575px;line-height:20px;font-size:11px;color:#222">Busulfan Tab.</div>
<div class="a t" style="left:450px;top:575px;width:54px;text-align:right;line-height:20px;font-size:11.5px;color:#222">0</div>
<div class="a t" style="left:516px;top:575px;line-height:20px;font-size:9.6px;color:#222">과세</div>
<div class="a t" style="left:566px;top:575px;line-height:20px;font-size:11.4px;color:#222">mg/m²</div>
<div class="a t" style="left:626px;top:575px;line-height:20px;font-size:11.2px;color:#222">PO</div>
<svg class="a" style="left:672px;top:577px" width="16" height="16" viewBox="0 0 16 15"><path d="M8 0.9L10.1 5.3L14.9 5.8L11.3 9.1L12.3 13.9L8 11.5L3.7 13.9L4.7 9.1L1.1 5.8L5.9 5.3Z" fill="none" stroke="#5b6370" stroke-width="1.1" stroke-linejoin="round"/></svg>
<div class="a" style="left:0;top:600px;width:666px;height:31px;background:#fff;border:1px solid #dcdfe8;border-right:none"></div>
<div class="a t" style="left:6px;top:605px;line-height:20px;font-size:11px;color:#222">12.Analgesics</div>
<div class="a t" style="left:126px;top:605px;line-height:20px;font-size:11px;color:#222">ANE030</div>
<div class="a t" style="left:186px;top:605px;line-height:20px;font-size:11px;color:#222">Midazolam Inj.</div>
<div class="a t" style="left:450px;top:605px;width:54px;text-align:right;line-height:20px;font-size:11.5px;color:#222">0</div>
<div class="a t" style="left:516px;top:605px;line-height:20px;font-size:9.6px;color:#222">과세</div>
<div class="a t" style="left:566px;top:605px;line-height:20px;font-size:11.4px;color:#222">mg/kg</div>
<div class="a t" style="left:626px;top:605px;line-height:20px;font-size:11.2px;color:#222">SC</div>
<svg class="a" style="left:672px;top:607px" width="16" height="16" viewBox="0 0 16 15"><path d="M8 0.9L10.1 5.3L14.9 5.8L11.3 9.1L12.3 13.9L8 11.5L3.7 13.9L4.7 9.1L1.1 5.8L5.9 5.3Z" fill="none" stroke="#5b6370" stroke-width="1.1" stroke-linejoin="round"/></svg>
<div class="a" style="left:0;top:630px;width:666px;height:31px;background:#fff;border:1px solid #dcdfe8;border-right:none"></div>
<div class="a t" style="left:6px;top:635px;line-height:20px;font-size:11px;color:#222">01.Antibiotics</div>
<div class="a t" style="left:126px;top:635px;line-height:20px;font-size:11px;color:#222">ANB018</div>
<div class="a t" style="left:186px;top:635px;line-height:20px;font-size:11px;color:#222">Carbenicillin Tab.</div>
<div class="a t" style="left:450px;top:635px;width:54px;text-align:right;line-height:20px;font-size:11.5px;color:#222">0</div>
<div class="a t" style="left:516px;top:635px;line-height:20px;font-size:9.6px;color:#222">과세</div>
<div class="a t" style="left:566px;top:635px;line-height:20px;font-size:11.4px;color:#222">mg/kg</div>
<div class="a t" style="left:626px;top:635px;line-height:20px;font-size:11.2px;color:#222">PO</div>
<svg class="a" style="left:672px;top:637px" width="16" height="16" viewBox="0 0 16 15"><path d="M8 0.9L10.1 5.3L14.9 5.8L11.3 9.1L12.3 13.9L8 11.5L3.7 13.9L4.7 9.1L1.1 5.8L5.9 5.3Z" fill="none" stroke="#5b6370" stroke-width="1.1" stroke-linejoin="round"/></svg>
<div class="a" style="left:0;top:660px;width:666px;height:31px;background:#fff;border:1px solid #dcdfe8;border-right:none"></div>
<div class="a t" style="left:6px;top:665px;line-height:20px;font-size:11px;color:#222">01.Antibiotics</div>
<div class="a t" style="left:126px;top:665px;line-height:20px;font-size:11px;color:#222">ANB019</div>
<div class="a t" style="left:186px;top:665px;line-height:20px;font-size:11px;color:#222">Carbenicillin Inj.</div>
<div class="a t" style="left:450px;top:665px;width:54px;text-align:right;line-height:20px;font-size:11.5px;color:#222">0</div>
<div class="a t" style="left:516px;top:665px;line-height:20px;font-size:9.6px;color:#222">과세</div>
<div class="a t" style="left:566px;top:665px;line-height:20px;font-size:11.4px;color:#222">mg/kg</div>
<div class="a t" style="left:626px;top:665px;line-height:20px;font-size:11.2px;color:#222">SC</div>
<svg class="a" style="left:672px;top:667px" width="16" height="16" viewBox="0 0 16 15"><path d="M8 0.9L10.1 5.3L14.9 5.8L11.3 9.1L12.3 13.9L8 11.5L3.7 13.9L4.7 9.1L1.1 5.8L5.9 5.3Z" fill="none" stroke="#5b6370" stroke-width="1.1" stroke-linejoin="round"/></svg>
<div class="a" style="left:0;top:690px;width:666px;height:31px;background:#fff;border:1px solid #dcdfe8;border-right:none"></div>
<div class="a t" style="left:6px;top:695px;line-height:20px;font-size:11px;color:#222">01.Antibiotics</div>
<div class="a t" style="left:126px;top:695px;line-height:20px;font-size:11px;color:#222">ANB020</div>
<div class="a t" style="left:186px;top:695px;line-height:20px;font-size:11px;color:#222">Carboplatin Inj.</div>
<div class="a t" style="left:450px;top:695px;width:54px;text-align:right;line-height:20px;font-size:11.5px;color:#222">0</div>
<div class="a t" style="left:516px;top:695px;line-height:20px;font-size:9.6px;color:#222">과세</div>
<div class="a t" style="left:566px;top:695px;line-height:20px;font-size:11.4px;color:#222">mg/m²</div>
<div class="a t" style="left:626px;top:695px;line-height:20px;font-size:11.2px;color:#222">IV</div>
<svg class="a" style="left:672px;top:697px" width="16" height="16" viewBox="0 0 16 15"><path d="M8 0.9L10.1 5.3L14.9 5.8L11.3 9.1L12.3 13.9L8 11.5L3.7 13.9L4.7 9.1L1.1 5.8L5.9 5.3Z" fill="none" stroke="#5b6370" stroke-width="1.1" stroke-linejoin="round"/></svg>
<div class="a" style="left:0;top:720px;width:666px;height:31px;background:#fff;border:1px solid #dcdfe8;border-right:none"></div>
<div class="a t" style="left:6px;top:725px;line-height:20px;font-size:11px;color:#222">01.Antibiotics</div>
<div class="a t" style="left:126px;top:725px;line-height:20px;font-size:11px;color:#222">ANB021</div>
<div class="a t" style="left:186px;top:725px;line-height:20px;font-size:11px;color:#222">Carmustine Inj.</div>
<div class="a t" style="left:450px;top:725px;width:54px;text-align:right;line-height:20px;font-size:11.5px;color:#222">0</div>
<div class="a t" style="left:516px;top:725px;line-height:20px;font-size:9.6px;color:#222">과세</div>
<div class="a t" style="left:566px;top:725px;line-height:20px;font-size:11.4px;color:#222">mg/m²</div>
<div class="a t" style="left:626px;top:725px;line-height:20px;font-size:11.2px;color:#222">IV</div>
<svg class="a" style="left:672px;top:727px" width="16" height="16" viewBox="0 0 16 15"><path d="M8 0.9L10.1 5.3L14.9 5.8L11.3 9.1L12.3 13.9L8 11.5L3.7 13.9L4.7 9.1L1.1 5.8L5.9 5.3Z" fill="none" stroke="#5b6370" stroke-width="1.1" stroke-linejoin="round"/></svg>
<div class="a" style="left:0;top:750px;width:666px;height:31px;background:#fff;border:1px solid #dcdfe8;border-right:none"></div>
<div class="a t" style="left:6px;top:755px;line-height:20px;font-size:11px;color:#222">01.Antibiotics</div>
<div class="a t" style="left:126px;top:755px;line-height:20px;font-size:11px;color:#222">ANB022</div>
<div class="a t" style="left:186px;top:755px;line-height:20px;font-size:11px;color:#222">Cefadroxil Tab.</div>
<div class="a t" style="left:450px;top:755px;width:54px;text-align:right;line-height:20px;font-size:11.5px;color:#222">0</div>
<div class="a t" style="left:516px;top:755px;line-height:20px;font-size:9.6px;color:#222">과세</div>
<div class="a t" style="left:566px;top:755px;line-height:20px;font-size:11.4px;color:#222">mg/kg</div>
<div class="a t" style="left:626px;top:755px;line-height:20px;font-size:11.2px;color:#222">PO</div>
<svg class="a" style="left:672px;top:757px" width="16" height="16" viewBox="0 0 16 15"><path d="M8 0.9L10.1 5.3L14.9 5.8L11.3 9.1L12.3 13.9L8 11.5L3.7 13.9L4.7 9.1L1.1 5.8L5.9 5.3Z" fill="none" stroke="#5b6370" stroke-width="1.1" stroke-linejoin="round"/></svg>
<div class="a" style="left:120px;top:0;width:1px;height:762px;background:#dcdfe8"></div>
<div class="a" style="left:180px;top:0;width:1px;height:762px;background:#dcdfe8"></div>
<div class="a" style="left:450px;top:0;width:1px;height:762px;background:#dcdfe8"></div>
<div class="a" style="left:510px;top:0;width:1px;height:762px;background:#dcdfe8"></div>
<div class="a" style="left:560px;top:0;width:1px;height:762px;background:#dcdfe8"></div>
<div class="a" style="left:620px;top:0;width:1px;height:762px;background:#dcdfe8"></div>
<svg class="a" style="left:672px;top:7px" width="16" height="16" viewBox="0 0 16 15"><path d="M8 0.9L10.1 5.3L14.9 5.8L11.3 9.1L12.3 13.9L8 11.5L3.7 13.9L4.7 9.1L1.1 5.8L5.9 5.3Z" fill="none" stroke="#5b6370" stroke-width="1.1" stroke-linejoin="round"/></svg>
</div>
<div class="a " style="left:1184px;top:278px;width:1px;height:1px;background:#dcdfe8"></div>
<div class="a " style="left:1213px;top:278px;width:6px;height:762px;background:#e4e6ee;border-radius:2px"></div>
<div class="a " style="left:1213px;top:278px;width:6px;height:379px;background:#a3aab3;border-radius:2px"></div>
<div class="a " style="left:519px;top:1039px;width:700px;height:1px;background:#dcdfe8"></div>
<div class="a " style="left:1234px;top:243px;width:1px;height:797px;background:#dcdfe8"></div>
<div class="a t" style="left:1249px;top:244.5px;line-height:19px;font-size:12px;font-weight:700;color:#222;;-webkit-text-stroke:0.1px currentColor">기본 정보 설정</div>
<div class="a t" style="left:1695px;top:245.0px;line-height:17px;font-size:10.8px;font-weight:400;color:#222;letter-spacing:-0.75px">사용 여부</div>
<div class="a " style="left:1749px;top:244px;width:40px;height:20px;background:#118bf2;border-radius:10px"></div>
<div class="a " style="left:1771px;top:246.5px;width:15px;height:15px;background:#fff;border-radius:8px"></div>
<div class="a " style="left:1784px;top:275px;width:5px;height:716px;background:#e4e6ee"></div>
<div class="a " style="left:1784px;top:275px;width:5px;height:690px;background:#a3aab3"></div>
<div class="a t" style="left:1249px;top:275.0px;line-height:17px;font-size:10.8px;font-weight:400;color:#222;">이름<span style="color:#e3262b">*</span></div>
<div class="a t" style="left:1429px;top:275.0px;line-height:17px;font-size:10.8px;font-weight:400;color:#222;">코드<span style="color:#e3262b">*</span></div>
<div class="a t" style="left:1609px;top:275.0px;line-height:17px;font-size:10.8px;font-weight:400;color:#222;letter-spacing:-0.2px">청구서/영수증 표기<span style="color:#e3262b">*</span></div>
<div class="a " style="left:1249px;top:297px;width:170px;height:25px;background:#eceef5;border-radius:3px"></div>
<div class="a t" style="left:1255px;top:300.0px;line-height:19px;font-size:12px;font-weight:400;color:#222;">Actinomycin D Inj.</div>
<div class="a " style="left:1429px;top:297px;width:170px;height:25px;background:#eceef5;border-radius:3px"></div>
<div class="a t" style="left:1435px;top:300.0px;line-height:19px;font-size:12px;font-weight:400;color:#222;">ANB002</div>
<div class="a " style="left:1609px;top:297px;width:170px;height:25px;background:#eceef5;border-radius:3px"></div>
<div class="a t" style="left:1615px;top:300.0px;line-height:19px;font-size:12px;font-weight:400;color:#222;">Acti****</div>
<div class="a t" style="left:1249px;top:332.5px;line-height:17px;font-size:10.8px;font-weight:400;color:#222;letter-spacing:-0.45px">판매 단가</div>
<div class="a " style="left:1249px;top:354px;width:80px;height:25px;background:#eceef5;border-radius:3px"></div>
<div class="a t" style="left:1255px;top:358.0px;line-height:17px;font-size:11px;font-weight:400;color:#5e6a78;-webkit-text-stroke:0.45px currentColor">과세</div>
<svg class="a" style="left:1310px;top:364px;" width="10" height="6" viewBox="0 0 10 6"><path d="M0 0H10L5.0 6Z" fill="#6b7785"/></svg>
<div class="a " style="left:1337px;top:354px;width:110px;height:25px;background:#eceef5;border-radius:3px"></div>
<div class="a t" style="left:1343px;top:357.0px;line-height:19px;font-size:12px;font-weight:400;color:#222;">0</div>
<div class="a t" style="left:1432px;top:358.0px;line-height:16px;font-size:10.5px;font-weight:400;color:#9aa0a8;">원</div>
<div class="a t" style="left:1455px;top:362.0px;line-height:16px;font-size:10px;font-weight:400;color:#8d939c;">*공급가액 : 0원 *부가세 : 0원 *총금액 : 0원</div>
<div class="a t" style="left:1249px;top:394.5px;line-height:17px;font-size:10.8px;font-weight:400;color:#222;letter-spacing:-0.45px">부가세 정보</div>
<div class="a t" style="left:1360.5px;top:394.5px;line-height:17px;font-size:10.8px;font-weight:400;color:#222;letter-spacing:-0.45px">바코드/QR코드</div>
<div class="a t" style="left:1574px;top:394.5px;line-height:17px;font-size:10.8px;font-weight:400;color:#222;letter-spacing:-0.45px">거래처</div>
<div class="a " style="left:1249px;top:416px;width:20px;height:20px;border:1px solid #cfd3dc;border-radius:10px;background:#fff"></div>
<div class="a t" style="left:1275px;top:417.5px;line-height:17px;font-size:11px;font-weight:400;color:#222;letter-spacing:-0.7px">포함</div>
<div class="a " style="left:1306px;top:416px;width:20px;height:20px;border:1px solid #cfd3dc;border-radius:10px;background:#fff"></div>
<div class="a " style="left:1311px;top:421px;width:10px;height:10px;background:#118bf2;border-radius:5px"></div>
<div class="a t" style="left:1332px;top:417.5px;line-height:17px;font-size:11px;font-weight:400;color:#222;letter-spacing:-0.7px">별도</div>
<div class="a " style="left:1361px;top:416px;width:205px;height:25px;background:#eceef5;border-radius:3px"></div>
<div class="a " style="left:1574px;top:416px;width:205px;height:25px;background:#eceef5;border-radius:3px"></div>
<div class="a " style="left:1249px;top:456px;width:530px;height:1px;background:#dcdfe8"></div>
<div class="a t" style="left:1249px;top:473.5px;line-height:19px;font-size:12px;font-weight:700;color:#222;;-webkit-text-stroke:0.1px currentColor">처방 정보 설정</div>
<div class="a t" style="left:1249px;top:504.0px;line-height:17px;font-size:10.8px;font-weight:400;color:#222;letter-spacing:-0.45px">용법</div>
<div class="a t" style="left:1337px;top:504.0px;line-height:17px;font-size:10.8px;font-weight:400;color:#222;letter-spacing:-0.45px">투여 단위</div>
<div class="a t" style="left:1533px;top:504.0px;line-height:17px;font-size:10.8px;font-weight:400;color:#222;letter-spacing:-0.45px">일투</div>
<div class="a t" style="left:1621px;top:504.0px;line-height:17px;font-size:10.8px;font-weight:400;color:#222;letter-spacing:-0.45px">일수</div>
<div class="a " style="left:1249px;top:526px;width:80px;height:25px;background:#eceef5;border-radius:3px"></div>
<div class="a t" style="left:1256px;top:529.5px;line-height:18px;font-size:11.5px;font-weight:400;color:#5e6a78;-webkit-text-stroke:0.45px currentColor">IV</div>
<svg class="a" style="left:1310px;top:536px;" width="10" height="6" viewBox="0 0 10 6"><path d="M0 0H10L5.0 6Z" fill="#6b7785"/></svg>
<div class="a " style="left:1337px;top:526px;width:90px;height:25px;background:#eceef5;border-radius:3px"></div>
<div class="a t" style="left:1344px;top:529.0px;line-height:19px;font-size:12px;font-weight:400;color:#5e6a78;-webkit-text-stroke:0.45px currentColor">mg</div>
<svg class="a" style="left:1408px;top:536px;" width="10" height="6" viewBox="0 0 10 6"><path d="M0 0H10L5.0 6Z" fill="#6b7785"/></svg>
<div class="a " style="left:1435px;top:526px;width:90px;height:25px;background:#eceef5;border-radius:3px"></div>
<div class="a t" style="left:1442px;top:529.5px;line-height:18px;font-size:11.5px;font-weight:400;color:#5e6a78;-webkit-text-stroke:0.45px currentColor">/ m²</div>
<svg class="a" style="left:1506px;top:536px;" width="10" height="6" viewBox="0 0 10 6"><path d="M0 0H10L5.0 6Z" fill="#6b7785"/></svg>
<div class="a " style="left:1533px;top:526px;width:80px;height:25px;background:#eceef5;border-radius:3px"></div>
<div class="a t" style="left:1540px;top:529.0px;line-height:19px;font-size:12px;font-weight:400;color:#222;">1</div>
<div class="a " style="left:1621px;top:526px;width:80px;height:25px;background:#eceef5;border-radius:3px"></div>
<div class="a t" style="left:1628px;top:529.0px;line-height:19px;font-size:12px;font-weight:400;color:#222;">1</div>
<div class="a t" style="left:1249px;top:558.5px;line-height:17px;font-size:10.8px;font-weight:400;color:#222;letter-spacing:-0.45px">단위 투약 용량</div>
<div class="a t" style="left:1337px;top:558.5px;line-height:17px;font-size:10.8px;font-weight:400;color:#222;letter-spacing:-0.45px">청구 기준</div>
<div class="a t" style="left:1435px;top:558.5px;line-height:17px;font-size:10.8px;font-weight:400;color:#222;letter-spacing:-0.45px">올림 방식</div>
<div class="a t" style="left:1533px;top:558.5px;line-height:17px;font-size:10.8px;font-weight:400;color:#222;letter-spacing:-0.45px">약품 종류</div>
<div class="a t" style="left:1621px;top:558.5px;line-height:17px;font-size:10.8px;font-weight:400;color:#222;letter-spacing:-0.45px">치방전 출력 기본값</div>
<div class="a " style="left:1249px;top:581px;width:80px;height:25px;background:#eceef5;border-radius:3px"></div>
<div class="a t" style="left:1255px;top:584.0px;line-height:19px;font-size:12px;font-weight:400;color:#222;">0</div>
<div class="a t" style="left:1308px;top:584.0px;line-height:19px;font-size:12px;font-weight:400;color:#a5abb3;">mg</div>
<div class="a " style="left:1337px;top:581px;width:90px;height:25px;background:#eceef5;border-radius:3px"></div>
<div class="a t" style="left:1344px;top:585.0px;line-height:17px;font-size:11px;font-weight:400;color:#5e6a78;-webkit-text-stroke:0.45px currentColor">개수(EA)</div>
<svg class="a" style="left:1408px;top:591px;" width="10" height="6" viewBox="0 0 10 6"><path d="M0 0H10L5.0 6Z" fill="#6b7785"/></svg>
<div class="a " style="left:1435px;top:581px;width:90px;height:25px;background:#eceef5;border-radius:3px"></div>
<div class="a t" style="left:1442px;top:585.0px;line-height:17px;font-size:11px;font-weight:400;color:#5e6a78;letter-spacing:-0.6px;-webkit-text-stroke:0.45px currentColor">그대로</div>
<svg class="a" style="left:1506px;top:591px;" width="10" height="6" viewBox="0 0 10 6"><path d="M0 0H10L5.0 6Z" fill="#6b7785"/></svg>
<div class="a " style="left:1533px;top:581px;width:80px;height:25px;background:#eceef5;border-radius:3px"></div>
<div class="a t" style="left:1540px;top:585.0px;line-height:17px;font-size:11px;font-weight:400;color:#5e6a78;letter-spacing:-0.6px;-webkit-text-stroke:0.45px currentColor">마약류</div>
<svg class="a" style="left:1594px;top:591px;" width="10" height="6" viewBox="0 0 10 6"><path d="M0 0H10L5.0 6Z" fill="#6b7785"/></svg>
<div class="a " style="left:1621px;top:581px;width:80px;height:25px;background:#eceef5;border-radius:3px"></div>
<div class="a t" style="left:1628px;top:585.0px;line-height:17px;font-size:11px;font-weight:400;color:#5e6a78;letter-spacing:-0.6px;-webkit-text-stroke:0.45px currentColor">출력함</div>
<svg class="a" style="left:1682px;top:591px;" width="10" height="6" viewBox="0 0 10 6"><path d="M0 0H10L5.0 6Z" fill="#6b7785"/></svg>
<div class="a " style="left:1519px;top:557px;width:95.5px;height:58px;border:4px solid #e3262b"></div>
<div class="a " style="left:1249px;top:616px;width:25px;height:25px;background:#eceef5;border-radius:3px"></div>
<svg class="a" style="left:1255px;top:623px;" width="13" height="11" viewBox="0 0 13 11"><path d="M1 5.5L4.8 9.3L12 1.5" fill="none" stroke="#8b929c" stroke-width="1.6"/></svg>
<div class="a t" style="left:1282px;top:619.0px;line-height:19px;font-size:12.1px;font-weight:400;color:#222;">보고 단위 변환</div>
<div class="a t" style="left:1367px;top:620.0px;line-height:17px;font-size:11px;font-weight:400;color:#8d9bb0;letter-spacing:0.3px">(마약류 보고 시)</div>
<div class="a t" style="left:1453px;top:619.5px;line-height:18px;font-size:11.6px;font-weight:400;color:#222;">1mg을</div>
<div class="a " style="left:1493px;top:616px;width:59px;height:25px;border:1px solid #d5d9e2;border-radius:3px;background:#fff"></div>
<div class="a " style="left:1558px;top:616px;width:79px;height:25px;border:1px solid #d5d9e2;border-radius:3px;background:#fff"></div>
<div class="a t" style="left:1566px;top:619.5px;line-height:17px;font-size:11px;font-weight:400;color:#5e6a78;">선택</div>
<svg class="a" style="left:1617px;top:626px;" width="10" height="6" viewBox="0 0 10 6"><path d="M0 0H10L5.0 6Z" fill="#c6cad1"/></svg>
<div class="a t" style="left:1643px;top:619.0px;line-height:19px;font-size:12px;font-weight:400;color:#222;letter-spacing:-0.6px">로 변환</div>
<div class="a t" style="left:1249px;top:651.5px;line-height:17px;font-size:10.8px;font-weight:400;color:#222;letter-spacing:-0.45px">축종</div>
<div class="a " style="left:1249px;top:673px;width:440px;height:25px;background:#eceef5;border-radius:3px"></div>
<div class="a t" style="left:1256px;top:677.0px;line-height:17px;font-size:11px;font-weight:400;color:#5e6a78;-webkit-text-stroke:0.45px currentColor">선택</div>
<svg class="a" style="left:1669px;top:683px;" width="10" height="6" viewBox="0 0 10 6"><path d="M0 0H10L5.0 6Z" fill="#6b7785"/></svg>
<div class="a " style="left:1707px;top:673px;width:72px;height:25px;background:#eceef5;border-radius:3px"></div>
<div class="a t" style="left:1707px;top:677.5px;line-height:16px;font-size:10.3px;font-weight:400;color:#5e6a78;width:72px;text-align:center;-webkit-text-stroke:0.45px currentColor;letter-spacing:0.45px">전체 종 선택</div>
<div class="a t" style="left:1249px;top:717.5px;line-height:19px;font-size:12.2px;font-weight:400;color:#222;">축종별 투여량</div>
<div class="a " style="left:1721px;top:714px;width:58px;height:25px;background:#f7f8fb;border-radius:3px"></div>
<div class="a t" style="left:1721px;top:718.0px;line-height:17px;font-size:11px;font-weight:400;color:#c3c7cf;width:58px;text-align:center;">축종 추가</div>
<div class="a " style="left:1249px;top:745px;width:530px;height:143px;border:1px solid #dcdfe8;border-radius:3px"></div>
<div class="a " style="left:1250px;top:746px;width:528px;height:30px;background:#eceef5"></div>
<div class="a " style="left:1250px;top:775px;width:528px;height:1px;background:#dcdfe8"></div>
<div class="a " style="left:1250px;top:805px;width:528px;height:1px;background:#dcdfe8"></div>
<div class="a " style="left:1347px;top:746px;width:1px;height:60px;background:#dcdfe8"></div>
<div class="a " style="left:1457px;top:746px;width:1px;height:60px;background:#dcdfe8"></div>
<div class="a " style="left:1567px;top:746px;width:1px;height:60px;background:#dcdfe8"></div>
<div class="a " style="left:1677px;top:746px;width:1px;height:60px;background:#dcdfe8"></div>
<div class="a t" style="left:1255px;top:753.0px;line-height:15px;font-size:9.5px;font-weight:700;color:#222;letter-spacing:-0.55px;-webkit-text-stroke:0.1px currentColor">축종</div>
<div class="a t" style="left:1255px;top:782.0px;line-height:16px;font-size:10px;font-weight:400;color:#222;">개</div>
<div class="a t" style="left:1353px;top:753.0px;line-height:15px;font-size:9.5px;font-weight:700;color:#222;letter-spacing:-0.55px;-webkit-text-stroke:0.1px currentColor">기본 투여량</div>
<div class="a t" style="left:1353px;top:781.5px;line-height:17px;font-size:11px;font-weight:400;color:#222;">0.5</div>
<div class="a t" style="left:1463px;top:753.0px;line-height:15px;font-size:9.5px;font-weight:700;color:#222;letter-spacing:-0.55px;-webkit-text-stroke:0.1px currentColor">최소 투여량</div>
<div class="a t" style="left:1463px;top:781.5px;line-height:17px;font-size:11px;font-weight:400;color:#222;">0.5</div>
<div class="a t" style="left:1573px;top:753.0px;line-height:15px;font-size:9.5px;font-weight:700;color:#222;letter-spacing:-0.55px;-webkit-text-stroke:0.1px currentColor">최대 투여량</div>
<div class="a t" style="left:1573px;top:781.5px;line-height:17px;font-size:11px;font-weight:400;color:#222;">1</div>
<div class="a t" style="left:1683px;top:753.0px;line-height:15px;font-size:9.5px;font-weight:700;color:#222;letter-spacing:-0.55px;-webkit-text-stroke:0.1px currentColor">투여 단위</div>
<div class="a t" style="left:1683px;top:781.5px;line-height:17px;font-size:11px;font-weight:400;color:#222;">mg/m²</div>
<div class="a t" style="left:1249px;top:898.5px;line-height:17px;font-size:10.8px;font-weight:400;color:#222;letter-spacing:-0.45px">설명</div>
<div class="a" style="left:1249px;top:920px;width:530px;height:71px;overflow:hidden"><div class="a" style="left:0;top:0;width:530px;height:110px;background:#eceef5;border-radius:4px"></div></div>
<div class="a t" style="left:1260px;top:927.5px;line-height:21px;font-size:13.5px;font-weight:400;color:#222;"><span style="margin-left:-6px;letter-spacing:-2.5px">【</span>Indication<span style="margin-left:-1.5px">】</span></div>
<div class="a t" style="left:1260px;top:949.0px;line-height:22px;font-size:14.3px;font-weight:400;color:#222;">Antineoplastic drug, part of chemotherapy protocols</div>
<div class="a " style="left:1249px;top:1006px;width:46px;height:34px;background:#e53238;border-radius:4px"></div>
<div class="a t" style="left:1249px;top:1014.0px;line-height:18px;font-size:11.5px;font-weight:700;color:#fff;width:46px;text-align:center;;-webkit-text-stroke:0.1px currentColor">삭제</div>
<div class="a " style="left:1659px;top:1006px;width:46px;height:34px;background:#eceef5;border-radius:4px"></div>
<div class="a t" style="left:1659px;top:1014.0px;line-height:18px;font-size:11.5px;font-weight:400;color:#4a5562;width:46px;text-align:center;-webkit-text-stroke:0.45px currentColor">취소</div>
<div class="a " style="left:1715px;top:1006px;width:74px;height:34px;background:#b4ddf9;border-radius:4px"></div>
<div class="a t" style="left:1715px;top:1014.0px;line-height:18px;font-size:11.5px;font-weight:700;color:#fff;width:74px;text-align:center;;-webkit-text-stroke:0.1px currentColor">설정 저장</div>
</body></html>
